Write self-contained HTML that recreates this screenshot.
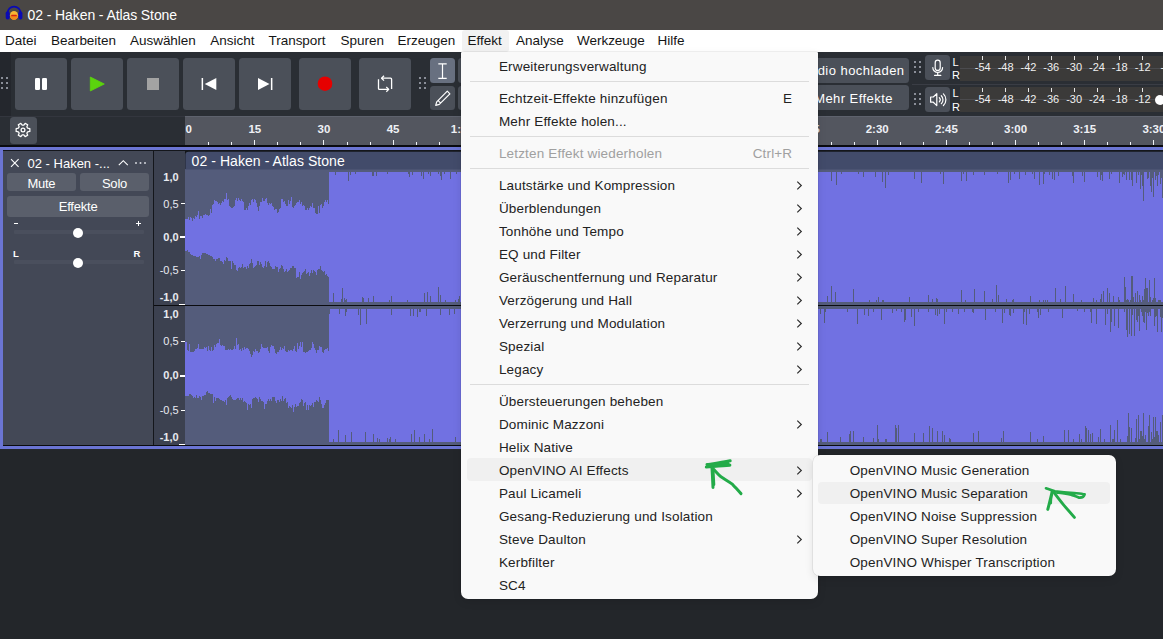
<!DOCTYPE html><html lang="de"><head><meta charset="utf-8"><title>02 - Haken - Atlas Stone</title><style>
*{box-sizing:border-box;margin:0;padding:0}
html,body{width:1163px;height:639px;overflow:hidden;background:#23262a}
body{position:relative;font-family:"Liberation Sans",sans-serif;font-size:13px;color:#fff}
.abs{position:absolute}
.t{position:absolute;white-space:nowrap;line-height:1}
#title{left:0;top:0;width:1163px;height:30px;background:#4a4745}
#menubar{left:0;top:30px;width:1163px;height:22px;background:#fff}
#menubar .t{color:#151515;font-size:13.5px;letter-spacing:-.03px;top:4.4px}
#toolbar{left:0;top:52px;width:1163px;height:64px;background:#2a2e34}
.btn{position:absolute;background:#4b5059;border-radius:3.5px}
.dot{position:absolute;width:2px;height:2px;background:#8a8e98}
#ruler{left:0;top:116px;width:1163px;height:30px;background:#2a2e34}
.rl{position:absolute;top:7.3px;font-weight:bold;font-size:11.5px;line-height:12px;color:#eef0f5;white-space:nowrap;transform:translateX(-50%)}
.menu{position:absolute;background:#f9f9f9;border-radius:7px;box-shadow:0 0 0 .6px rgba(0,0,0,.10),0 3px 8px rgba(0,0,0,.10)}
.mi{position:absolute;left:0;height:23px;line-height:23px;font-size:13.5px;letter-spacing:.17px;color:#222;white-space:nowrap}
.mi.dis{color:#a0a0a0}
.sep{position:absolute;height:1px;background:#dcdcdc}
.hl{position:absolute;background:#f0f0f0;border-radius:4px}
.sc{position:absolute;right:0;text-align:right}
.vl{position:absolute;font-size:11px;line-height:11px;color:#e8eaf0;white-space:nowrap;text-align:right;width:26px;left:153px}
.vl b{font-weight:bold}
.ml{position:absolute;font-size:11px;line-height:11px;color:#f0f0f0;white-space:nowrap;transform:translateX(-50%)}
</style></head><body>
<div id="title" class="abs">
<svg class="abs" style="left:5px;top:5px" width="18" height="16" viewBox="5 5 18 16"><path d="M7.6 14 V13 a6.45 6.45 0 0 1 12.9 0 V14" fill="none" stroke="#0a0ab4" stroke-width="1.7"/><rect x="5.7" y="11.3" width="4" height="8.2" rx="1.9" fill="#0a0ab4"/><rect x="18.4" y="11.3" width="4" height="8.2" rx="1.9" fill="#0a0ab4"/><ellipse cx="14" cy="15.4" rx="4.1" ry="4.4" fill="#f7b733"/><path d="M9.9 15.4 a4.1 4.4 0 0 0 8.2 0 z" fill="#f08a1c"/><rect x="11.2" y="14.8" width="5.6" height="1.5" rx=".5" fill="#d8230f"/></svg>
<div class="t" style="left:27.6px;top:8.3px;font-size:14px;letter-spacing:-.1px;color:#fff">02 - Haken - Atlas Stone</div>
</div>
<div id="menubar" class="abs">
<div class="abs" style="left:462px;top:0;width:47px;height:22px;background:#f2f2f2;border-radius:3px"></div>
<div class="t" style="left:5px">Datei</div>
<div class="t" style="left:51px">Bearbeiten</div>
<div class="t" style="left:130px">Auswählen</div>
<div class="t" style="left:210.3px">Ansicht</div>
<div class="t" style="left:268.5px">Transport</div>
<div class="t" style="left:340.6px">Spuren</div>
<div class="t" style="left:397.6px">Erzeugen</div>
<div class="t" style="left:467.6px">Effekt</div>
<div class="t" style="left:516px">Analyse</div>
<div class="t" style="left:577px">Werkzeuge</div>
<div class="t" style="left:657.6px">Hilfe</div>
</div>
<div id="toolbar" class="abs">
<div class="abs" style="left:0;top:0;width:11px;height:64px;background:#24272d"></div>
<div class="dot" style="left:0.9px;top:25px"></div><div class="dot" style="left:0.9px;top:30px"></div><div class="dot" style="left:0.9px;top:35px"></div><div class="dot" style="left:5.9px;top:25px"></div><div class="dot" style="left:5.9px;top:30px"></div><div class="dot" style="left:5.9px;top:35px"></div>
<div class="btn" style="left:15px;top:6px;width:52px;height:52px"></div>
<div class="btn" style="left:71px;top:6px;width:52px;height:52px"></div>
<div class="btn" style="left:127px;top:6px;width:52px;height:52px"></div>
<div class="btn" style="left:183px;top:6px;width:52px;height:52px"></div>
<div class="btn" style="left:239px;top:6px;width:52px;height:52px"></div>
<div class="btn" style="left:299px;top:6px;width:52px;height:52px"></div>
<div class="btn" style="left:359px;top:6px;width:52px;height:52px"></div>
<svg class="abs" style="left:0;top:0" width="470" height="64" viewBox="0 52 470 64">
<rect x="35" y="78" width="5" height="12" rx="1.3" fill="#fff"/><rect x="42" y="78" width="5" height="12" rx="1.3" fill="#fff"/>
<path d="M90.3 77 L104.3 84 L90.3 91 Z" fill="#5bd40d" stroke="#5bd40d" stroke-width="0.8" stroke-linejoin="round"/>
<rect x="147" y="78" width="12" height="12" fill="#a3a3a3"/>
<rect x="201.6" y="78" width="1.5" height="12" fill="#fff"/><path d="M204.8 84 L216.3 78 V90 Z" fill="#fff"/>
<path d="M258 78 L269.5 84 L258 90 Z" fill="#fff"/><rect x="270.9" y="78" width="1.5" height="12" fill="#fff"/>
<circle cx="325" cy="83.7" r="7.3" fill="#e60000"/>
<g fill="none" stroke="#fff" stroke-width="1.3" stroke-linecap="butt" stroke-linejoin="round"><path d="M381.6 78.2 H390.6 a1 1 0 0 1 1 1 V88.9"/><path d="M384 75.8 L381.6 78.2 L384 80.6"/><path d="M378.5 79.2 V88.4 a1 1 0 0 0 1 1 H388.6"/><path d="M386.3 87 L388.7 89.4 L386.3 91.8"/></g>
</svg>
<div class="dot" style="left:419px;top:25px"></div><div class="dot" style="left:419px;top:30px"></div><div class="dot" style="left:419px;top:35px"></div><div class="dot" style="left:424px;top:25px"></div><div class="dot" style="left:424px;top:30px"></div><div class="dot" style="left:424px;top:35px"></div>
<div class="btn" style="left:430px;top:6px;width:25px;height:24.5px;background:#687080"></div>
<div class="btn" style="left:430px;top:33.5px;width:25px;height:24.5px"></div>
<div class="btn" style="left:457.5px;top:6px;width:25px;height:24.5px"></div>
<div class="btn" style="left:457.5px;top:33.5px;width:25px;height:24.5px"></div>
<svg class="abs" style="left:430px;top:6px" width="25" height="52" viewBox="430 58 25 52"><g fill="none" stroke="#fff" stroke-width="1.2"><path d="M442.5 63.8 V78.4 M438.3 63.8 H446.7 M438.3 78.4 H446.7"/><path d="M447.3 91.2 l2.6 2.6 l-10.6 10.6 l-3.6 1 l1 -3.6 z M438.2 100.6 l2.7 2.7" stroke-linejoin="round"/></g></svg>
</div>
<div class="btn" style="left:796px;top:58px;width:113px;height:24.5px"></div>
<div class="btn" style="left:796px;top:85.3px;width:113px;height:24.5px"></div>
<div class="t" style="right:258.5px;top:64.1px;font-size:13px;letter-spacing:.45px;color:#fff">Audio hochladen</div>
<div class="t" style="right:270px;top:91.8px;font-size:13px;letter-spacing:.45px;color:#fff">Mehr Effekte</div>
<div class="dot" style="left:913.7px;top:60.8px"></div><div class="dot" style="left:913.7px;top:65.8px"></div><div class="dot" style="left:913.7px;top:70.8px"></div><div class="dot" style="left:918.7px;top:60.8px"></div><div class="dot" style="left:918.7px;top:65.8px"></div><div class="dot" style="left:918.7px;top:70.8px"></div>
<div class="dot" style="left:913.7px;top:92.7px"></div><div class="dot" style="left:913.7px;top:97.7px"></div><div class="dot" style="left:913.7px;top:102.7px"></div><div class="dot" style="left:918.7px;top:92.7px"></div><div class="dot" style="left:918.7px;top:97.7px"></div><div class="dot" style="left:918.7px;top:102.7px"></div>
<div class="abs" style="left:912px;top:84px;width:251px;height:1px;background:#3a3d45"></div>
<div class="btn" style="left:924.9px;top:55px;width:25.1px;height:25px"></div>
<div class="btn" style="left:924.9px;top:87px;width:25.1px;height:25px"></div>
<svg class="abs" style="left:925px;top:55px" width="26" height="58" viewBox="925 55 26 58"><g fill="none" stroke="#fff" stroke-width="1.2" stroke-linecap="round" stroke-linejoin="round"><rect x="935.2" y="60.2" width="5" height="10.2" rx="2.5"/><path d="M932.8 67.5 a4.9 4.9 0 0 0 9.8 0 M937.7 72.6 V75.4 M934.6 75.4 H940.8"/><path d="M930.6 97 H933.3 L936.8 93.6 V105.6 L933.3 102.2 H930.6 Z"/><path d="M939.3 97.6 a3 3 0 0 1 0 4.2 M941.3 95.7 a5.6 5.6 0 0 1 0 8 M943.4 93.9 a8 8 0 0 1 0 11.6"/></g></svg>
<div class="t" style="left:952.5px;top:56.5px;font-size:11px;color:#fff">L</div>
<div class="t" style="left:952px;top:70px;font-size:11px;color:#fff">R</div>
<div class="t" style="left:952.5px;top:88.3px;font-size:11px;color:#fff">L</div>
<div class="t" style="left:952px;top:101.8px;font-size:11px;color:#fff">R</div>
<div class="abs" style="left:959.5px;top:55.5px;width:204px;height:25px;background:#3b3a39"></div>
<div class="abs" style="left:959.5px;top:67.5px;width:204px;height:1px;background:#4b4b4e"></div>
<div class="abs" style="left:982.3px;top:56.0px;width:1px;height:4px;background:#e6e6e6"></div>
<div class="ml" style="left:982.8px;top:62.0px">-54</div>
<div class="abs" style="left:1005.1px;top:56.0px;width:1px;height:4px;background:#e6e6e6"></div>
<div class="ml" style="left:1005.6px;top:62.0px">-48</div>
<div class="abs" style="left:1028.0px;top:56.0px;width:1px;height:4px;background:#e6e6e6"></div>
<div class="ml" style="left:1028.5px;top:62.0px">-42</div>
<div class="abs" style="left:1050.8px;top:56.0px;width:1px;height:4px;background:#e6e6e6"></div>
<div class="ml" style="left:1051.3px;top:62.0px">-36</div>
<div class="abs" style="left:1073.6px;top:56.0px;width:1px;height:4px;background:#e6e6e6"></div>
<div class="ml" style="left:1074.1px;top:62.0px">-30</div>
<div class="abs" style="left:1096.5px;top:56.0px;width:1px;height:4px;background:#e6e6e6"></div>
<div class="ml" style="left:1097.0px;top:62.0px">-24</div>
<div class="abs" style="left:1119.3px;top:56.0px;width:1px;height:4px;background:#e6e6e6"></div>
<div class="ml" style="left:1119.8px;top:62.0px">-18</div>
<div class="abs" style="left:1142.1px;top:56.0px;width:1px;height:4px;background:#e6e6e6"></div>
<div class="ml" style="left:1142.6px;top:62.0px">-12</div>
<div class="abs" style="left:1164.9px;top:56.0px;width:1px;height:4px;background:#e6e6e6"></div>
<div class="ml" style="left:1165.4px;top:62.0px">-6</div>
<div class="abs" style="left:959.5px;top:87.3px;width:204px;height:25px;background:#3b3a39"></div>
<div class="abs" style="left:959.5px;top:99.3px;width:204px;height:1px;background:#4b4b4e"></div>
<div class="abs" style="left:982.3px;top:87.8px;width:1px;height:4px;background:#e6e6e6"></div>
<div class="ml" style="left:982.8px;top:93.8px">-54</div>
<div class="abs" style="left:1005.1px;top:87.8px;width:1px;height:4px;background:#e6e6e6"></div>
<div class="ml" style="left:1005.6px;top:93.8px">-48</div>
<div class="abs" style="left:1028.0px;top:87.8px;width:1px;height:4px;background:#e6e6e6"></div>
<div class="ml" style="left:1028.5px;top:93.8px">-42</div>
<div class="abs" style="left:1050.8px;top:87.8px;width:1px;height:4px;background:#e6e6e6"></div>
<div class="ml" style="left:1051.3px;top:93.8px">-36</div>
<div class="abs" style="left:1073.6px;top:87.8px;width:1px;height:4px;background:#e6e6e6"></div>
<div class="ml" style="left:1074.1px;top:93.8px">-30</div>
<div class="abs" style="left:1096.5px;top:87.8px;width:1px;height:4px;background:#e6e6e6"></div>
<div class="ml" style="left:1097.0px;top:93.8px">-24</div>
<div class="abs" style="left:1119.3px;top:87.8px;width:1px;height:4px;background:#e6e6e6"></div>
<div class="ml" style="left:1119.8px;top:93.8px">-18</div>
<div class="abs" style="left:1142.1px;top:87.8px;width:1px;height:4px;background:#e6e6e6"></div>
<div class="ml" style="left:1142.6px;top:93.8px">-12</div>
<div class="abs" style="left:1164.9px;top:87.8px;width:1px;height:4px;background:#e6e6e6"></div>
<div class="ml" style="left:1165.4px;top:93.8px">-6</div>
<div class="abs" style="left:1154.5px;top:94.7px;width:10.5px;height:10.5px;border-radius:50%;background:#fff"></div>
<div id="ruler" class="abs">
<div class="abs" style="left:0;top:0;width:1163px;height:1px;background:#33363e"></div>
<div class="btn" style="left:10.1px;top:.8px;width:26.8px;height:27.2px"></div>
<svg class="abs" style="left:9.9px;top:.9px" width="26" height="26" viewBox="-13 -13 26 26"><g fill="none" stroke="#fff" stroke-width="1.25" stroke-linejoin="round">
<path d="M4.68 -1.76 L6.85 -1.46 L6.85 1.46 L4.68 1.76 L3.87 3.17 L4.69 5.20 L2.16 6.66 L0.81 4.93 L-0.81 4.93 L-2.16 6.66 L-4.69 5.20 L-3.87 3.17 L-4.68 1.76 L-6.85 1.46 L-6.85 -1.46 L-4.68 -1.76 L-3.87 -3.17 L-4.69 -5.20 L-2.16 -6.66 L-0.81 -4.93 L0.81 -4.93 L2.16 -6.66 L4.69 -5.20 L3.87 -3.17 Z"/><circle r="1.9"/></g></svg>
<div class="abs" style="left:185px;top:0;width:978px;height:30px;background:#53565f"></div>
<div class="abs" style="left:185px;top:0;width:978px;height:1px;background:#5e626d"></div>
<div class="rl" style="left:185.5px;transform:none">0</div>
<div class="abs" style="left:208.2px;top:25.5px;width:1px;height:3.4px;background:#f0f2f6"></div>
<div class="abs" style="left:231.2px;top:25.5px;width:1px;height:3.4px;background:#f0f2f6"></div>
<div class="abs" style="left:254.3px;top:23.5px;width:1px;height:5.4px;background:#f0f2f6"></div>
<div class="rl" style="left:254.8px">15</div>
<div class="abs" style="left:277.3px;top:25.5px;width:1px;height:3.4px;background:#f0f2f6"></div>
<div class="abs" style="left:300.4px;top:25.5px;width:1px;height:3.4px;background:#f0f2f6"></div>
<div class="abs" style="left:323.4px;top:23.5px;width:1px;height:5.4px;background:#f0f2f6"></div>
<div class="rl" style="left:323.9px">30</div>
<div class="abs" style="left:346.5px;top:25.5px;width:1px;height:3.4px;background:#f0f2f6"></div>
<div class="abs" style="left:369.5px;top:25.5px;width:1px;height:3.4px;background:#f0f2f6"></div>
<div class="abs" style="left:392.6px;top:23.5px;width:1px;height:5.4px;background:#f0f2f6"></div>
<div class="rl" style="left:393.1px">45</div>
<div class="abs" style="left:415.6px;top:25.5px;width:1px;height:3.4px;background:#f0f2f6"></div>
<div class="abs" style="left:438.7px;top:25.5px;width:1px;height:3.4px;background:#f0f2f6"></div>
<div class="abs" style="left:461.8px;top:23.5px;width:1px;height:5.4px;background:#f0f2f6"></div>
<div class="rl" style="left:462.3px">1:00</div>
<div class="abs" style="left:484.8px;top:25.5px;width:1px;height:3.4px;background:#f0f2f6"></div>
<div class="abs" style="left:507.9px;top:25.5px;width:1px;height:3.4px;background:#f0f2f6"></div>
<div class="abs" style="left:530.9px;top:23.5px;width:1px;height:5.4px;background:#f0f2f6"></div>
<div class="rl" style="left:531.4px">1:15</div>
<div class="abs" style="left:554.0px;top:25.5px;width:1px;height:3.4px;background:#f0f2f6"></div>
<div class="abs" style="left:577.0px;top:25.5px;width:1px;height:3.4px;background:#f0f2f6"></div>
<div class="abs" style="left:600.1px;top:23.5px;width:1px;height:5.4px;background:#f0f2f6"></div>
<div class="rl" style="left:600.6px">1:30</div>
<div class="abs" style="left:623.1px;top:25.5px;width:1px;height:3.4px;background:#f0f2f6"></div>
<div class="abs" style="left:646.2px;top:25.5px;width:1px;height:3.4px;background:#f0f2f6"></div>
<div class="abs" style="left:669.3px;top:23.5px;width:1px;height:5.4px;background:#f0f2f6"></div>
<div class="rl" style="left:669.8px">1:45</div>
<div class="abs" style="left:692.3px;top:25.5px;width:1px;height:3.4px;background:#f0f2f6"></div>
<div class="abs" style="left:715.4px;top:25.5px;width:1px;height:3.4px;background:#f0f2f6"></div>
<div class="abs" style="left:738.4px;top:23.5px;width:1px;height:5.4px;background:#f0f2f6"></div>
<div class="rl" style="left:738.9px">2:00</div>
<div class="abs" style="left:761.5px;top:25.5px;width:1px;height:3.4px;background:#f0f2f6"></div>
<div class="abs" style="left:784.5px;top:25.5px;width:1px;height:3.4px;background:#f0f2f6"></div>
<div class="abs" style="left:807.6px;top:23.5px;width:1px;height:5.4px;background:#f0f2f6"></div>
<div class="rl" style="left:808.1px">2:15</div>
<div class="abs" style="left:830.6px;top:25.5px;width:1px;height:3.4px;background:#f0f2f6"></div>
<div class="abs" style="left:853.7px;top:25.5px;width:1px;height:3.4px;background:#f0f2f6"></div>
<div class="abs" style="left:876.8px;top:23.5px;width:1px;height:5.4px;background:#f0f2f6"></div>
<div class="rl" style="left:877.2px">2:30</div>
<div class="abs" style="left:899.8px;top:25.5px;width:1px;height:3.4px;background:#f0f2f6"></div>
<div class="abs" style="left:922.9px;top:25.5px;width:1px;height:3.4px;background:#f0f2f6"></div>
<div class="abs" style="left:945.9px;top:23.5px;width:1px;height:5.4px;background:#f0f2f6"></div>
<div class="rl" style="left:946.4px">2:45</div>
<div class="abs" style="left:969.0px;top:25.5px;width:1px;height:3.4px;background:#f0f2f6"></div>
<div class="abs" style="left:992.0px;top:25.5px;width:1px;height:3.4px;background:#f0f2f6"></div>
<div class="abs" style="left:1015.1px;top:23.5px;width:1px;height:5.4px;background:#f0f2f6"></div>
<div class="rl" style="left:1015.6px">3:00</div>
<div class="abs" style="left:1038.1px;top:25.5px;width:1px;height:3.4px;background:#f0f2f6"></div>
<div class="abs" style="left:1061.2px;top:25.5px;width:1px;height:3.4px;background:#f0f2f6"></div>
<div class="abs" style="left:1084.2px;top:23.5px;width:1px;height:5.4px;background:#f0f2f6"></div>
<div class="rl" style="left:1084.7px">3:15</div>
<div class="abs" style="left:1107.3px;top:25.5px;width:1px;height:3.4px;background:#f0f2f6"></div>
<div class="abs" style="left:1130.4px;top:25.5px;width:1px;height:3.4px;background:#f0f2f6"></div>
<div class="abs" style="left:1153.4px;top:23.5px;width:1px;height:5.4px;background:#f0f2f6"></div>
<div class="rl" style="left:1153.9px">3:30</div>
</div>
<div class="abs" style="left:0;top:144.9px;width:1163px;height:1.9px;background:#0a0b0f"></div>
<div class="abs" style="left:0;top:146.7px;width:1163px;height:302.5px;background:#6b75d3"></div>
<div class="abs" style="left:2.6px;top:150.2px;width:1161px;height:295.3px;background:#14161b"></div>
<div class="abs" style="left:3.4px;top:151px;width:149.6px;height:293.8px;background:#434856"></div>
<div class="abs" style="left:154px;top:151px;width:31px;height:293.8px;background:#3c4150"></div>
<svg class="abs" style="left:8px;top:156px" width="144" height="14" viewBox="8 156 144 14"><g fill="none" stroke="#fff" stroke-width="1.1"><path d="M11 159.2 L18.6 166.8 M18.6 159.2 L11 166.8"/><path d="M118.8 165.2 L123.3 160.7 L127.8 165.2"/></g><circle cx="136" cy="163" r="1" fill="#d0d3da"/><circle cx="140.5" cy="163" r="1" fill="#d0d3da"/><circle cx="145" cy="163" r="1" fill="#d0d3da"/></svg>
<div class="t" style="left:27.5px;top:157px;font-size:13px;letter-spacing:0;color:#fff">02 - Haken -...</div>
<div class="btn" style="left:7.2px;top:173.3px;width:68.5px;height:17.4px;background:#5a5f6b;border-radius:3px"></div>
<div class="btn" style="left:80px;top:173.3px;width:69px;height:17.4px;background:#5a5f6b;border-radius:3px"></div>
<div class="btn" style="left:7.2px;top:195.5px;width:141.8px;height:21.2px;background:#5a5f6b;border-radius:3px"></div>
<div class="t" style="left:7.2px;width:68.5px;text-align:center;top:176.7px;font-size:13px;letter-spacing:-.3px;color:#fff">Mute</div>
<div class="t" style="left:80px;width:69px;text-align:center;top:176.7px;font-size:13px;letter-spacing:-.2px;color:#fff">Solo</div>
<div class="t" style="left:7.2px;width:141.8px;text-align:center;top:199.8px;font-size:13px;letter-spacing:-.2px;color:#fff">Effekte</div>
<div class="abs" style="left:13.5px;top:230.2px;width:130px;height:3.5px;background:#4a4f5d;border-radius:1px"></div>
<div class="abs" style="left:72.8px;top:228.0px;width:10.4px;height:10.4px;border-radius:50%;background:#fff"></div>
<div class="abs" style="left:13.5px;top:260px;width:130px;height:3.5px;background:#4a4f5d;border-radius:1px"></div>
<div class="abs" style="left:72.8px;top:257.8px;width:10.4px;height:10.4px;border-radius:50%;background:#fff"></div>
<div class="abs" style="left:13.7px;top:222.6px;width:4.2px;height:1.3px;background:#fff"></div>
<div class="abs" style="left:136.2px;top:222.6px;width:5px;height:1.3px;background:#fff"></div><div class="abs" style="left:138.05px;top:220.7px;width:1.3px;height:5px;background:#fff"></div>
<div class="t" style="left:13px;top:248.5px;font-size:9.5px;font-weight:bold;color:#fff">L</div>
<div class="t" style="left:133.6px;top:248.5px;font-size:9.5px;font-weight:bold;color:#fff">R</div>
<div class="vl" style="top:171.8px;left:138.6px;width:40px"><b>1,0</b></div>
<div class="vl" style="top:198.5px;left:138.6px;width:40px">0,5</div>
<div class="vl" style="top:232.0px;left:138.6px;width:40px"><b>0,0</b></div>
<div class="vl" style="top:265.4px;left:138.6px;width:40px">-0,5</div>
<div class="vl" style="top:291.8px;left:138.6px;width:40px"><b>-1,0</b></div>
<div class="vl" style="top:309.3px;left:138.6px;width:40px"><b>1,0</b></div>
<div class="vl" style="top:336.0px;left:138.6px;width:40px">0,5</div>
<div class="vl" style="top:370.3px;left:138.6px;width:40px"><b>0,0</b></div>
<div class="vl" style="top:405.4px;left:138.6px;width:40px">-0,5</div>
<div class="vl" style="top:431.6px;left:138.6px;width:40px"><b>-1,0</b></div>
<div class="abs" style="left:181px;top:203.2px;width:4px;height:1px;background:#fff"></div>
<div class="abs" style="left:180px;top:236.2px;width:5px;height:2px;background:#fff"></div>
<div class="abs" style="left:181px;top:269.7px;width:4px;height:1px;background:#fff"></div>
<div class="abs" style="left:179px;top:303.6px;width:6px;height:1px;background:#fff"></div>
<div class="abs" style="left:181px;top:340.8px;width:4px;height:1px;background:#fff"></div>
<div class="abs" style="left:180px;top:374.5px;width:5px;height:2px;background:#fff"></div>
<div class="abs" style="left:181px;top:409.9px;width:4px;height:1px;background:#fff"></div>
<div class="abs" style="left:179px;top:443.8px;width:6px;height:1px;background:#fff"></div>
<svg class="abs" style="left:185px;top:151px" width="978" height="294" viewBox="185 151 978 294" shape-rendering="crispEdges"><rect x="185.4" y="169" width="978" height="276" fill="#545c7b"/><path d="M185.4 169.4 V155 a3.2 3.2 0 0 1 3.2 -3.2 H1163 V169.4 Z" fill="#424b6a" shape-rendering="auto"/><path d="M185.4 237.0L185.4 218.5 H187L187 218.7 H188L188 216.6 H189L189 220.2 H190L190 217.2 H191L191 218.0 H192L192 221.0 H193L193 218.1 H194L194 219.3 H195L195 216.0 H196L196 216.6 H197L197 215.1 H198L198 210.8 H199L199 218.6 H200L200 216.2 H201L201 216.0 H202L202 218.0 H203L203 215.2 H204L204 214.8 H205L205 213.8 H206L206 215.2 H207L207 215.4 H208L208 215.6 H209L209 215.0 H210L210 208.7 H211L211 213.2 H212L212 205.0 H213L213 204.2 H214L214 199.9 H215L215 201.1 H216L216 201.4 H217L217 202.4 H218L218 204.3 H219L219 203.3 H220L220 205.4 H221L221 202.5 H222L222 201.4 H223L223 201.6 H224L224 199.3 H225L225 198.5 H226L226 193.4 H227L227 199.5 H228L228 199.4 H229L229 205.7 H230L230 207.1 H231L231 208.4 H232L232 208.1 H233L233 207.0 H234L234 206.1 H235L235 199.8 H236L236 197.7 H237L237 200.5 H238L238 197.9 H239L239 200.0 H240L240 200.6 H241L241 199.4 H242L242 201.3 H243L243 202.4 H244L244 209.7 H245L245 210.2 H246L246 207.6 H247L247 209.6 H248L248 206.2 H249L249 202.5 H250L250 205.4 H251L251 200.1 H252L252 199.1 H253L253 202.2 H254L254 198.5 H255L255 200.3 H256L256 203.3 H257L257 207.2 H258L258 211.1 H259L259 206.1 H260L260 202.0 H261L261 201.9 H262L262 197.5 H263L263 201.1 H264L264 200.7 H265L265 199.4 H266L266 198.3 H267L267 203.0 H268L268 205.2 H269L269 203.3 H270L270 203.5 H271L271 202.6 H272L272 206.1 H273L273 206.6 H274L274 210.2 H275L275 208.6 H276L276 209.4 H277L277 212.8 H278L278 211.7 H279L279 208.5 H280L280 208.1 H281L281 198.7 H282L282 198.8 H283L283 201.5 H284L284 201.4 H285L285 204.4 H286L286 206.2 H287L287 205.8 H288L288 200.3 H289L289 203.7 H290L290 201.4 H291L291 197.0 H292L292 206.7 H293L293 207.7 H294L294 206.3 H295L295 205.2 H296L296 202.7 H297L297 201.8 H298L298 201.8 H299L299 200.4 H300L300 204.2 H301L301 202.3 H302L302 206.4 H303L303 205.2 H304L304 205.5 H305L305 210.1 H306L306 210.3 H307L307 208.0 H308L308 209.7 H309L309 208.0 H310L310 205.6 H311L311 206.5 H312L312 203.0 H313L313 207.8 H314L314 207.9 H315L315 213.1 H316L316 214.1 H317L317 214.1 H318L318 205.7 H319L319 212.5 H320L320 204.9 H321L321 203.6 H322L322 208.2 H323L323 205.8 H324L324 201.9 H325L325 200.1 H326L326 201.5 H327L327 200.2 H328L328 203.6 H329L329 171.6 H330L330 171.6 H331L331 171.6 H332L332 171.6 H333L333 171.6 H334L334 171.6 H335L335 174.5 H336L336 171.6 H337L337 171.6 H338L338 171.6 H339L339 171.6 H340L340 171.6 H341L341 171.6 H342L342 171.6 H343L343 171.6 H344L344 171.6 H345L345 171.6 H346L346 171.6 H347L347 171.6 H348L348 181.4 H349L349 171.6 H350L350 174.6 H351L351 171.6 H352L352 171.6 H353L353 171.6 H354L354 171.6 H355L355 174.0 H356L356 171.6 H357L357 171.6 H358L358 171.6 H359L359 171.6 H360L360 171.6 H361L361 171.6 H362L362 171.6 H363L363 171.6 H364L364 171.6 H365L365 171.6 H366L366 171.6 H367L367 171.6 H368L368 171.6 H369L369 171.6 H370L370 171.6 H371L371 171.6 H372L372 176.3 H373L373 176.4 H374L374 171.6 H375L375 171.6 H376L376 175.8 H377L377 171.6 H378L378 171.6 H379L379 171.6 H380L380 171.6 H381L381 171.6 H382L382 171.6 H383L383 171.6 H384L384 171.6 H385L385 171.6 H386L386 171.6 H387L387 174.2 H388L388 171.6 H389L389 171.6 H390L390 171.6 H391L391 171.6 H392L392 171.6 H393L393 171.6 H394L394 171.6 H395L395 171.6 H396L396 171.6 H397L397 171.6 H398L398 171.6 H399L399 171.6 H400L400 171.6 H401L401 171.6 H402L402 171.6 H403L403 171.6 H404L404 171.6 H405L405 171.6 H406L406 171.6 H407L407 171.6 H408L408 174.1 H409L409 177.0 H410L410 171.6 H411L411 171.6 H412L412 174.9 H413L413 171.6 H414L414 171.6 H415L415 171.6 H416L416 171.6 H417L417 171.6 H418L418 171.6 H419L419 171.6 H420L420 171.6 H421L421 176.1 H422L422 171.6 H423L423 179.1 H424L424 171.6 H425L425 171.6 H426L426 171.6 H427L427 171.6 H428L428 174.0 H429L429 171.6 H430L430 175.6 H431L431 171.6 H432L432 171.6 H433L433 171.6 H434L434 171.6 H435L435 171.6 H436L436 171.6 H437L437 171.6 H438L438 174.4 H439L439 171.6 H440L440 175.5 H441L441 179.8 H442L442 171.6 H443L443 171.6 H444L444 174.0 H445L445 171.6 H446L446 171.6 H447L447 171.6 H448L448 171.6 H449L449 171.6 H450L450 178.5 H451L451 171.6 H452L452 171.6 H453L453 171.6 H454L454 171.6 H455L455 171.6 H456L456 174.0 H457L457 171.6 H458L458 171.6 H459L459 171.6 H460L460 171.6 H461L461 171.6 H462L462 171.6 H463L463 171.6 H464L464 187.5 H465L465 171.6 H466L466 171.6 H467L467 171.6 H468L468 171.6 H469L469 171.6 H470L470 171.6 H471L471 171.6 H472L472 171.6 H473L473 171.6 H474L474 171.6 H475L475 171.6 H476L476 174.3 H477L477 171.6 H478L478 171.6 H479L479 171.6 H480L480 171.6 H481L481 171.6 H482L482 188.6 H483L483 171.6 H484L484 171.6 H485L485 171.6 H486L486 171.6 H487L487 171.6 H488L488 171.6 H489L489 180.0 H490L490 171.6 H491L491 171.6 H492L492 171.6 H493L493 171.6 H494L494 184.5 H495L495 171.6 H496L496 171.6 H497L497 171.6 H498L498 171.6 H499L499 179.9 H500L500 171.6 H501L501 171.6 H502L502 171.6 H503L503 171.6 H504L504 171.6 H505L505 171.6 H506L506 188.6 H507L507 171.6 H508L508 171.6 H509L509 171.6 H510L510 171.6 H511L511 185.3 H512L512 171.6 H513L513 171.6 H514L514 171.6 H515L515 171.6 H516L516 178.6 H517L517 171.6 H518L518 171.6 H519L519 171.6 H520L520 171.6 H521L521 171.6 H522L522 174.0 H523L523 171.6 H524L524 174.5 H525L525 171.6 H526L526 171.6 H527L527 171.6 H528L528 171.6 H529L529 171.6 H530L530 171.6 H531L531 171.6 H532L532 171.6 H533L533 171.6 H534L534 181.2 H535L535 174.2 H536L536 171.6 H537L537 171.6 H538L538 171.6 H539L539 171.6 H540L540 171.6 H541L541 171.6 H542L542 171.6 H543L543 171.6 H544L544 171.6 H545L545 171.6 H546L546 171.6 H547L547 171.6 H548L548 171.6 H549L549 171.6 H550L550 171.6 H551L551 171.6 H552L552 171.6 H553L553 171.6 H554L554 171.6 H555L555 171.6 H556L556 186.0 H557L557 171.6 H558L558 171.6 H559L559 171.6 H560L560 186.0 H561L561 171.6 H562L562 171.6 H563L563 171.6 H564L564 180.0 H565L565 171.6 H566L566 171.6 H567L567 171.6 H568L568 171.6 H569L569 171.6 H570L570 171.6 H571L571 171.6 H572L572 171.6 H573L573 171.6 H574L574 171.6 H575L575 176.3 H576L576 174.4 H577L577 171.6 H578L578 171.6 H579L579 171.6 H580L580 177.2 H581L581 171.6 H582L582 175.8 H583L583 171.6 H584L584 171.6 H585L585 178.8 H586L586 171.6 H587L587 171.6 H588L588 171.6 H589L589 171.6 H590L590 171.6 H591L591 184.8 H592L592 171.6 H593L593 171.6 H594L594 171.6 H595L595 171.6 H596L596 171.6 H597L597 171.6 H598L598 171.6 H599L599 171.6 H600L600 171.6 H601L601 176.6 H602L602 186.6 H603L603 171.6 H604L604 171.6 H605L605 171.6 H606L606 171.6 H607L607 171.6 H608L608 171.6 H609L609 171.6 H610L610 171.6 H611L611 171.6 H612L612 178.1 H613L613 171.6 H614L614 176.0 H615L615 171.6 H616L616 171.6 H617L617 176.4 H618L618 179.2 H619L619 171.6 H620L620 171.6 H621L621 171.6 H622L622 171.6 H623L623 171.6 H624L624 174.1 H625L625 171.6 H626L626 171.6 H627L627 171.6 H628L628 171.6 H629L629 171.6 H630L630 171.6 H631L631 171.6 H632L632 182.7 H633L633 171.6 H634L634 171.6 H635L635 171.6 H636L636 182.1 H637L637 171.6 H638L638 171.6 H639L639 171.6 H640L640 171.6 H641L641 171.6 H642L642 171.6 H643L643 171.6 H644L644 171.6 H645L645 171.6 H646L646 171.6 H647L647 171.6 H648L648 171.6 H649L649 185.4 H650L650 176.8 H651L651 171.6 H652L652 171.6 H653L653 171.6 H654L654 182.2 H655L655 171.6 H656L656 171.6 H657L657 171.6 H658L658 171.6 H659L659 171.6 H660L660 171.6 H661L661 171.6 H662L662 171.6 H663L663 171.6 H664L664 171.6 H665L665 171.6 H666L666 171.6 H667L667 171.6 H668L668 171.6 H669L669 171.6 H670L670 171.6 H671L671 171.6 H672L672 171.6 H673L673 171.6 H674L674 171.6 H675L675 171.6 H676L676 171.6 H677L677 171.6 H678L678 171.6 H679L679 182.7 H680L680 171.6 H681L681 171.6 H682L682 171.6 H683L683 171.6 H684L684 171.6 H685L685 171.6 H686L686 171.6 H687L687 171.6 H688L688 171.6 H689L689 171.6 H690L690 171.6 H691L691 171.6 H692L692 171.6 H693L693 171.6 H694L694 171.6 H695L695 171.6 H696L696 187.1 H697L697 171.6 H698L698 171.6 H699L699 171.6 H700L700 171.6 H701L701 171.6 H702L702 171.6 H703L703 171.6 H704L704 178.7 H705L705 171.6 H706L706 180.6 H707L707 171.6 H708L708 171.6 H709L709 171.6 H710L710 178.1 H711L711 171.6 H712L712 171.6 H713L713 171.6 H714L714 171.6 H715L715 171.6 H716L716 171.6 H717L717 171.6 H718L718 171.6 H719L719 171.6 H720L720 171.6 H721L721 177.6 H722L722 171.6 H723L723 171.6 H724L724 178.0 H725L725 174.2 H726L726 171.6 H727L727 171.6 H728L728 171.6 H729L729 171.6 H730L730 174.0 H731L731 171.6 H732L732 171.6 H733L733 171.6 H734L734 171.6 H735L735 171.6 H736L736 171.6 H737L737 171.6 H738L738 171.6 H739L739 171.6 H740L740 171.6 H741L741 171.6 H742L742 171.6 H743L743 171.6 H744L744 171.6 H745L745 171.6 H746L746 171.6 H747L747 171.6 H748L748 171.6 H749L749 171.6 H750L750 171.6 H751L751 171.6 H752L752 171.6 H753L753 171.6 H754L754 171.6 H755L755 171.6 H756L756 171.6 H757L757 171.6 H758L758 171.6 H759L759 174.6 H760L760 171.6 H761L761 171.6 H762L762 181.6 H763L763 171.6 H764L764 171.6 H765L765 171.6 H766L766 171.6 H767L767 171.6 H768L768 171.6 H769L769 171.6 H770L770 171.6 H771L771 171.6 H772L772 171.6 H773L773 175.4 H774L774 171.6 H775L775 171.6 H776L776 171.6 H777L777 171.6 H778L778 171.6 H779L779 171.6 H780L780 171.6 H781L781 171.6 H782L782 171.6 H783L783 171.6 H784L784 171.6 H785L785 171.6 H786L786 171.6 H787L787 171.6 H788L788 175.0 H789L789 171.6 H790L790 171.6 H791L791 171.6 H792L792 171.6 H793L793 171.6 H794L794 171.6 H795L795 171.6 H796L796 171.6 H797L797 171.6 H798L798 171.6 H799L799 171.6 H800L800 171.6 H801L801 171.6 H802L802 171.6 H803L803 171.6 H804L804 171.6 H805L805 171.6 H806L806 177.7 H807L807 171.6 H808L808 171.6 H809L809 171.6 H810L810 171.6 H811L811 171.6 H812L812 171.6 H813L813 171.6 H814L814 171.6 H815L815 171.6 H816L816 171.6 H817L817 171.6 H818L818 171.6 H819L819 171.6 H820L820 171.6 H821L821 171.6 H822L822 171.6 H823L823 171.6 H824L824 171.6 H825L825 171.6 H826L826 171.6 H827L827 171.6 H828L828 171.6 H829L829 171.6 H830L830 171.6 H831L831 180.6 H832L832 171.6 H833L833 171.6 H834L834 171.6 H835L835 171.6 H836L836 185.2 H837L837 171.6 H838L838 171.6 H839L839 171.6 H840L840 171.6 H841L841 174.4 H842L842 171.6 H843L843 171.6 H844L844 171.6 H845L845 171.6 H846L846 171.6 H847L847 171.6 H848L848 171.6 H849L849 171.6 H850L850 171.6 H851L851 171.6 H852L852 171.6 H853L853 171.6 H854L854 171.6 H855L855 171.6 H856L856 171.6 H857L857 171.6 H858L858 174.0 H859L859 171.6 H860L860 171.6 H861L861 171.6 H862L862 171.6 H863L863 176.8 H864L864 171.6 H865L865 171.6 H866L866 171.6 H867L867 171.6 H868L868 171.6 H869L869 171.6 H870L870 171.6 H871L871 171.6 H872L872 171.6 H873L873 171.6 H874L874 171.6 H875L875 177.3 H876L876 171.6 H877L877 171.6 H878L878 171.6 H879L879 171.6 H880L880 171.6 H881L881 171.6 H882L882 181.5 H883L883 171.6 H884L884 171.6 H885L885 187.6 H886L886 171.6 H887L887 171.6 H888L888 175.3 H889L889 171.6 H890L890 171.6 H891L891 171.6 H892L892 171.6 H893L893 171.6 H894L894 171.6 H895L895 171.6 H896L896 171.6 H897L897 171.6 H898L898 171.6 H899L899 171.6 H900L900 171.6 H901L901 171.6 H902L902 171.6 H903L903 171.6 H904L904 171.6 H905L905 171.6 H906L906 171.6 H907L907 171.6 H908L908 171.6 H909L909 171.6 H910L910 171.6 H911L911 171.6 H912L912 171.6 H913L913 171.6 H914L914 179.0 H915L915 171.6 H916L916 171.6 H917L917 171.6 H918L918 171.6 H919L919 171.6 H920L920 171.6 H921L921 183.1 H922L922 171.6 H923L923 171.6 H924L924 171.6 H925L925 171.6 H926L926 171.6 H927L927 171.6 H928L928 171.6 H929L929 171.6 H930L930 171.6 H931L931 171.6 H932L932 171.6 H933L933 171.6 H934L934 171.6 H935L935 171.6 H936L936 171.6 H937L937 171.6 H938L938 171.6 H939L939 171.6 H940L940 174.1 H941L941 171.6 H942L942 171.6 H943L943 184.0 H944L944 171.6 H945L945 171.6 H946L946 171.6 H947L947 171.6 H948L948 171.6 H949L949 171.6 H950L950 171.6 H951L951 171.6 H952L952 171.6 H953L953 171.6 H954L954 171.6 H955L955 171.6 H956L956 171.6 H957L957 171.6 H958L958 171.6 H959L959 171.6 H960L960 171.6 H961L961 181.2 H962L962 171.6 H963L963 174.0 H964L964 171.6 H965L965 171.6 H966L966 181.2 H967L967 171.6 H968L968 171.6 H969L969 171.6 H970L970 171.6 H971L971 171.6 H972L972 171.6 H973L973 175.4 H974L974 171.6 H975L975 171.6 H976L976 171.6 H977L977 171.6 H978L978 171.6 H979L979 171.6 H980L980 171.6 H981L981 171.6 H982L982 171.6 H983L983 171.6 H984L984 175.3 H985L985 171.6 H986L986 171.6 H987L987 171.6 H988L988 171.6 H989L989 171.6 H990L990 171.6 H991L991 171.6 H992L992 171.6 H993L993 171.6 H994L994 171.6 H995L995 171.6 H996L996 171.6 H997L997 174.3 H998L998 171.6 H999L999 171.6 H1000L1000 171.6 H1001L1001 171.6 H1002L1002 171.6 H1003L1003 171.6 H1004L1004 171.6 H1005L1005 171.6 H1006L1006 171.6 H1007L1007 171.6 H1008L1008 182.6 H1009L1009 171.6 H1010L1010 180.0 H1011L1011 171.6 H1012L1012 171.6 H1013L1013 171.6 H1014L1014 174.4 H1015L1015 171.6 H1016L1016 171.6 H1017L1017 171.6 H1018L1018 171.6 H1019L1019 178.7 H1020L1020 171.6 H1021L1021 171.6 H1022L1022 171.6 H1023L1023 171.6 H1024L1024 171.6 H1025L1025 174.5 H1026L1026 171.6 H1027L1027 171.6 H1028L1028 171.6 H1029L1029 171.6 H1030L1030 171.6 H1031L1031 171.6 H1032L1032 174.0 H1033L1033 171.6 H1034L1034 179.2 H1035L1035 171.6 H1036L1036 171.6 H1037L1037 171.6 H1038L1038 171.6 H1039L1039 185.1 H1040L1040 171.6 H1041L1041 171.6 H1042L1042 171.6 H1043L1043 184.2 H1044L1044 174.0 H1045L1045 171.6 H1046L1046 171.6 H1047L1047 171.6 H1048L1048 171.6 H1049L1049 174.6 H1050L1050 171.6 H1051L1051 171.6 H1052L1052 178.8 H1053L1053 171.6 H1054L1054 179.6 H1055L1055 171.6 H1056L1056 171.6 H1057L1057 171.6 H1058L1058 176.2 H1059L1059 171.6 H1060L1060 171.6 H1061L1061 171.6 H1062L1062 171.6 H1063L1063 171.6 H1064L1064 171.6 H1065L1065 171.6 H1066L1066 171.6 H1067L1067 171.6 H1068L1068 171.6 H1069L1069 171.6 H1070L1070 171.6 H1071L1071 171.6 H1072L1072 176.4 H1073L1073 183.1 H1074L1074 171.6 H1075L1075 171.6 H1076L1076 171.6 H1077L1077 171.6 H1078L1078 171.6 H1079L1079 171.6 H1080L1080 171.6 H1081L1081 171.6 H1082L1082 175.6 H1083L1083 171.6 H1084L1084 181.6 H1085L1085 171.6 H1086L1086 171.6 H1087L1087 171.6 H1088L1088 171.6 H1089L1089 171.6 H1090L1090 171.6 H1091L1091 171.6 H1092L1092 171.6 H1093L1093 171.6 H1094L1094 171.6 H1095L1095 171.6 H1096L1096 171.6 H1097L1097 177.1 H1098L1098 171.6 H1099L1099 171.6 H1100L1100 180.1 H1101L1101 174.5 H1102L1102 181.4 H1103L1103 171.6 H1104L1104 171.6 H1105L1105 171.6 H1106L1106 171.6 H1107L1107 171.6 H1108L1108 171.6 H1109L1109 178.6 H1110L1110 171.6 H1111L1111 174.3 H1112L1112 171.6 H1113L1113 171.6 H1114L1114 171.6 H1115L1115 171.6 H1116L1116 171.6 H1117L1117 171.6 H1118L1118 171.6 H1119L1119 183.3 H1120L1120 171.6 H1121L1121 171.6 H1122L1122 176.7 H1123L1123 174.0 H1124L1124 174.5 H1125L1125 171.6 H1126L1126 179.6 H1127L1127 171.6 H1128L1128 171.6 H1129L1129 180.3 H1130L1130 171.6 H1131L1131 180.3 H1132L1132 185.8 H1133L1133 171.6 H1134L1134 171.6 H1135L1135 171.6 H1136L1136 182.5 H1137L1137 171.6 H1138L1138 174.8 H1139L1139 171.6 H1140L1140 189.1 H1141L1141 174.8 H1142L1142 185.8 H1143L1143 201.1 H1144L1144 171.6 H1145L1145 171.6 H1146L1146 171.6 H1147L1147 178.8 H1148L1148 177.5 H1149L1149 171.6 H1150L1150 185.8 H1151L1151 192.2 H1152L1152 178.1 H1153L1153 196.7 H1154L1154 171.6 H1155L1155 180.4 H1156L1156 176.2 H1157L1157 185.6 H1158L1158 175.0 H1159L1159 171.6 H1160L1160 184.2 H1161L1161 177.5 H1162L1162 198.3 H1163V237.0L1163 302.4 H1162L1162 302.4 H1161L1161 300.0 H1160L1160 300.0 H1159L1159 299.9 H1158L1158 302.4 H1157L1157 302.4 H1156L1156 297.6 H1155L1155 278.0 H1154L1154 298.2 H1153L1153 299.5 H1152L1152 302.4 H1151L1151 297.2 H1150L1150 279.7 H1149L1149 302.4 H1148L1148 288.1 H1147L1147 288.0 H1146L1146 278.1 H1145L1145 289.3 H1144L1144 299.6 H1143L1143 296.1 H1142L1142 302.4 H1141L1141 299.6 H1140L1140 295.0 H1139L1139 302.4 H1138L1138 291.3 H1137L1137 302.4 H1136L1136 292.8 H1135L1135 302.4 H1134L1134 297.1 H1133L1133 275.7 H1132L1132 276.0 H1131L1131 300.0 H1130L1130 302.4 H1129L1129 300.0 H1128L1128 299.4 H1127L1127 300.0 H1126L1126 287.0 H1125L1125 277.4 H1124L1124 302.4 H1123L1123 302.4 H1122L1122 302.4 H1121L1121 302.4 H1120L1120 299.6 H1119L1119 296.8 H1118L1118 302.4 H1117L1117 302.4 H1116L1116 302.4 H1115L1115 302.4 H1114L1114 295.8 H1113L1113 302.4 H1112L1112 302.4 H1111L1111 302.4 H1110L1110 292.7 H1109L1109 302.4 H1108L1108 287.8 H1107L1107 302.4 H1106L1106 302.4 H1105L1105 302.4 H1104L1104 290.8 H1103L1103 302.4 H1102L1102 294.3 H1101L1101 299.2 H1100L1100 302.4 H1099L1099 302.4 H1098L1098 302.4 H1097L1097 299.9 H1096L1096 302.4 H1095L1095 302.4 H1094L1094 297.5 H1093L1093 302.4 H1092L1092 302.4 H1091L1091 302.4 H1090L1090 302.4 H1089L1089 302.4 H1088L1088 302.4 H1087L1087 302.4 H1086L1086 302.4 H1085L1085 302.4 H1084L1084 302.4 H1083L1083 302.4 H1082L1082 300.0 H1081L1081 302.4 H1080L1080 302.4 H1079L1079 302.4 H1078L1078 302.4 H1077L1077 302.4 H1076L1076 302.4 H1075L1075 302.4 H1074L1074 294.1 H1073L1073 302.4 H1072L1072 302.4 H1071L1071 302.4 H1070L1070 302.4 H1069L1069 302.4 H1068L1068 302.4 H1067L1067 302.4 H1066L1066 285.7 H1065L1065 302.4 H1064L1064 302.4 H1063L1063 302.4 H1062L1062 302.4 H1061L1061 298.8 H1060L1060 302.4 H1059L1059 302.4 H1058L1058 302.4 H1057L1057 302.4 H1056L1056 288.2 H1055L1055 302.4 H1054L1054 302.4 H1053L1053 302.4 H1052L1052 302.4 H1051L1051 302.4 H1050L1050 302.4 H1049L1049 302.4 H1048L1048 299.8 H1047L1047 302.4 H1046L1046 300.0 H1045L1045 302.4 H1044L1044 299.6 H1043L1043 302.4 H1042L1042 302.4 H1041L1041 302.4 H1040L1040 299.5 H1039L1039 302.4 H1038L1038 302.4 H1037L1037 302.4 H1036L1036 302.4 H1035L1035 302.4 H1034L1034 302.4 H1033L1033 302.4 H1032L1032 302.4 H1031L1031 296.4 H1030L1030 302.4 H1029L1029 302.4 H1028L1028 302.4 H1027L1027 302.4 H1026L1026 302.4 H1025L1025 302.4 H1024L1024 302.4 H1023L1023 302.4 H1022L1022 302.4 H1021L1021 302.4 H1020L1020 302.4 H1019L1019 302.4 H1018L1018 302.4 H1017L1017 302.4 H1016L1016 302.4 H1015L1015 302.4 H1014L1014 299.4 H1013L1013 300.0 H1012L1012 302.4 H1011L1011 302.4 H1010L1010 302.4 H1009L1009 302.4 H1008L1008 302.4 H1007L1007 299.3 H1006L1006 302.4 H1005L1005 302.4 H1004L1004 302.4 H1003L1003 302.4 H1002L1002 302.4 H1001L1001 302.4 H1000L1000 302.4 H999L999 295.3 H998L998 302.4 H997L997 285.3 H996L996 302.4 H995L995 302.4 H994L994 302.4 H993L993 299.1 H992L992 302.4 H991L991 302.4 H990L990 302.4 H989L989 302.4 H988L988 302.4 H987L987 302.4 H986L986 302.4 H985L985 290.5 H984L984 302.4 H983L983 302.4 H982L982 302.4 H981L981 302.4 H980L980 302.4 H979L979 302.4 H978L978 302.4 H977L977 302.4 H976L976 302.4 H975L975 289.3 H974L974 302.4 H973L973 302.4 H972L972 302.4 H971L971 302.4 H970L970 302.4 H969L969 302.4 H968L968 302.4 H967L967 302.4 H966L966 299.9 H965L965 302.4 H964L964 302.4 H963L963 302.4 H962L962 289.5 H961L961 302.4 H960L960 302.4 H959L959 302.4 H958L958 302.4 H957L957 302.4 H956L956 302.4 H955L955 302.4 H954L954 302.4 H953L953 302.4 H952L952 302.4 H951L951 302.4 H950L950 302.4 H949L949 302.4 H948L948 302.4 H947L947 302.4 H946L946 302.4 H945L945 302.4 H944L944 302.4 H943L943 302.4 H942L942 302.4 H941L941 302.4 H940L940 302.4 H939L939 302.4 H938L938 298.6 H937L937 297.9 H936L936 302.4 H935L935 302.4 H934L934 302.4 H933L933 298.7 H932L932 302.4 H931L931 302.4 H930L930 302.4 H929L929 294.5 H928L928 302.4 H927L927 302.4 H926L926 302.4 H925L925 302.4 H924L924 302.4 H923L923 302.4 H922L922 302.4 H921L921 302.4 H920L920 302.4 H919L919 302.4 H918L918 302.4 H917L917 302.4 H916L916 302.4 H915L915 302.4 H914L914 302.4 H913L913 302.4 H912L912 302.4 H911L911 302.4 H910L910 297.4 H909L909 302.4 H908L908 302.4 H907L907 302.4 H906L906 302.4 H905L905 302.4 H904L904 302.4 H903L903 302.4 H902L902 302.4 H901L901 302.4 H900L900 302.4 H899L899 302.4 H898L898 302.4 H897L897 302.4 H896L896 302.4 H895L895 302.4 H894L894 302.4 H893L893 302.4 H892L892 302.4 H891L891 302.4 H890L890 302.4 H889L889 302.4 H888L888 302.4 H887L887 302.4 H886L886 302.4 H885L885 302.4 H884L884 300.0 H883L883 300.0 H882L882 302.4 H881L881 302.4 H880L880 302.4 H879L879 297.3 H878L878 302.4 H877L877 300.0 H876L876 302.4 H875L875 302.4 H874L874 302.4 H873L873 302.4 H872L872 302.4 H871L871 302.4 H870L870 299.7 H869L869 302.4 H868L868 302.4 H867L867 302.4 H866L866 302.4 H865L865 302.4 H864L864 302.4 H863L863 302.4 H862L862 302.4 H861L861 302.4 H860L860 302.4 H859L859 302.4 H858L858 302.4 H857L857 302.4 H856L856 302.4 H855L855 302.4 H854L854 288.9 H853L853 302.4 H852L852 302.4 H851L851 302.4 H850L850 302.4 H849L849 302.4 H848L848 302.4 H847L847 302.4 H846L846 302.4 H845L845 302.4 H844L844 302.4 H843L843 302.4 H842L842 302.4 H841L841 302.4 H840L840 302.4 H839L839 302.4 H838L838 302.4 H837L837 302.4 H836L836 292.1 H835L835 302.4 H834L834 302.4 H833L833 302.4 H832L832 285.6 H831L831 302.4 H830L830 302.4 H829L829 302.4 H828L828 296.1 H827L827 302.4 H826L826 302.4 H825L825 302.4 H824L824 302.4 H823L823 302.4 H822L822 302.4 H821L821 302.4 H820L820 302.4 H819L819 302.4 H818L818 302.4 H817L817 302.4 H816L816 302.4 H815L815 302.4 H814L814 302.4 H813L813 302.4 H812L812 290.5 H811L811 302.4 H810L810 302.4 H809L809 296.3 H808L808 302.4 H807L807 302.4 H806L806 302.4 H805L805 302.4 H804L804 302.4 H803L803 293.0 H802L802 302.4 H801L801 302.4 H800L800 302.4 H799L799 302.4 H798L798 302.4 H797L797 302.4 H796L796 302.4 H795L795 302.4 H794L794 302.4 H793L793 302.4 H792L792 302.4 H791L791 302.4 H790L790 302.4 H789L789 302.4 H788L788 298.7 H787L787 302.4 H786L786 302.4 H785L785 299.3 H784L784 302.4 H783L783 299.6 H782L782 291.3 H781L781 302.4 H780L780 302.4 H779L779 302.4 H778L778 302.4 H777L777 302.4 H776L776 302.4 H775L775 302.4 H774L774 302.4 H773L773 299.3 H772L772 302.4 H771L771 302.4 H770L770 295.9 H769L769 298.6 H768L768 299.5 H767L767 298.9 H766L766 302.4 H765L765 302.4 H764L764 293.2 H763L763 302.4 H762L762 302.4 H761L761 302.4 H760L760 302.4 H759L759 287.5 H758L758 296.3 H757L757 302.4 H756L756 302.4 H755L755 302.4 H754L754 302.4 H753L753 290.7 H752L752 302.4 H751L751 302.4 H750L750 302.4 H749L749 302.4 H748L748 291.3 H747L747 302.4 H746L746 302.4 H745L745 302.4 H744L744 302.4 H743L743 302.4 H742L742 302.4 H741L741 302.4 H740L740 302.4 H739L739 299.1 H738L738 302.4 H737L737 302.4 H736L736 302.4 H735L735 302.4 H734L734 291.2 H733L733 302.4 H732L732 302.4 H731L731 302.4 H730L730 302.4 H729L729 302.4 H728L728 302.4 H727L727 300.0 H726L726 302.4 H725L725 302.4 H724L724 302.4 H723L723 302.4 H722L722 302.4 H721L721 302.4 H720L720 302.4 H719L719 302.4 H718L718 302.4 H717L717 298.7 H716L716 302.4 H715L715 296.5 H714L714 302.4 H713L713 302.4 H712L712 302.4 H711L711 302.4 H710L710 302.4 H709L709 302.4 H708L708 302.4 H707L707 300.0 H706L706 302.4 H705L705 285.4 H704L704 287.9 H703L703 286.8 H702L702 302.4 H701L701 302.4 H700L700 302.4 H699L699 302.4 H698L698 302.4 H697L697 302.4 H696L696 302.4 H695L695 302.4 H694L694 302.4 H693L693 302.4 H692L692 302.4 H691L691 302.4 H690L690 302.4 H689L689 302.4 H688L688 296.5 H687L687 302.4 H686L686 295.7 H685L685 302.4 H684L684 302.4 H683L683 302.4 H682L682 302.4 H681L681 302.4 H680L680 302.4 H679L679 302.4 H678L678 302.4 H677L677 290.8 H676L676 302.4 H675L675 302.4 H674L674 302.4 H673L673 292.7 H672L672 298.6 H671L671 302.4 H670L670 302.4 H669L669 302.4 H668L668 302.4 H667L667 302.4 H666L666 289.9 H665L665 302.4 H664L664 302.4 H663L663 302.4 H662L662 302.4 H661L661 302.4 H660L660 302.4 H659L659 302.4 H658L658 302.4 H657L657 302.4 H656L656 302.4 H655L655 302.4 H654L654 302.4 H653L653 302.4 H652L652 302.4 H651L651 302.4 H650L650 302.4 H649L649 302.4 H648L648 302.4 H647L647 302.4 H646L646 302.4 H645L645 299.8 H644L644 302.4 H643L643 299.8 H642L642 298.5 H641L641 302.4 H640L640 302.4 H639L639 290.9 H638L638 302.4 H637L637 302.4 H636L636 302.4 H635L635 287.0 H634L634 302.4 H633L633 294.2 H632L632 302.4 H631L631 302.4 H630L630 302.4 H629L629 285.5 H628L628 302.4 H627L627 302.4 H626L626 302.4 H625L625 302.4 H624L624 302.4 H623L623 302.4 H622L622 302.4 H621L621 302.4 H620L620 302.4 H619L619 302.4 H618L618 302.4 H617L617 302.4 H616L616 302.4 H615L615 302.4 H614L614 302.4 H613L613 302.4 H612L612 289.6 H611L611 302.4 H610L610 302.4 H609L609 302.4 H608L608 302.4 H607L607 302.4 H606L606 302.4 H605L605 302.4 H604L604 302.4 H603L603 302.4 H602L602 299.0 H601L601 302.4 H600L600 302.4 H599L599 299.9 H598L598 302.4 H597L597 302.4 H596L596 299.7 H595L595 302.4 H594L594 302.4 H593L593 302.4 H592L592 302.4 H591L591 302.4 H590L590 302.4 H589L589 299.3 H588L588 302.4 H587L587 302.4 H586L586 299.9 H585L585 302.4 H584L584 290.7 H583L583 302.4 H582L582 302.4 H581L581 289.0 H580L580 302.4 H579L579 302.4 H578L578 302.4 H577L577 302.4 H576L576 302.4 H575L575 302.4 H574L574 302.4 H573L573 302.4 H572L572 296.8 H571L571 302.4 H570L570 302.4 H569L569 302.4 H568L568 302.4 H567L567 302.4 H566L566 302.4 H565L565 302.4 H564L564 302.4 H563L563 302.4 H562L562 302.4 H561L561 298.1 H560L560 302.4 H559L559 302.4 H558L558 302.4 H557L557 302.4 H556L556 302.4 H555L555 302.4 H554L554 302.4 H553L553 302.4 H552L552 297.4 H551L551 302.4 H550L550 302.4 H549L549 302.4 H548L548 302.4 H547L547 302.4 H546L546 302.4 H545L545 302.4 H544L544 302.4 H543L543 302.4 H542L542 302.4 H541L541 294.1 H540L540 302.4 H539L539 302.4 H538L538 302.4 H537L537 302.4 H536L536 302.4 H535L535 302.4 H534L534 302.4 H533L533 302.4 H532L532 302.4 H531L531 298.3 H530L530 302.4 H529L529 302.4 H528L528 302.4 H527L527 285.4 H526L526 302.4 H525L525 302.4 H524L524 302.4 H523L523 302.4 H522L522 302.4 H521L521 302.4 H520L520 302.4 H519L519 302.4 H518L518 302.4 H517L517 302.4 H516L516 302.4 H515L515 302.4 H514L514 302.4 H513L513 302.4 H512L512 302.4 H511L511 302.4 H510L510 302.4 H509L509 302.4 H508L508 302.4 H507L507 302.4 H506L506 302.4 H505L505 302.4 H504L504 302.4 H503L503 302.4 H502L502 302.4 H501L501 302.4 H500L500 302.4 H499L499 302.4 H498L498 302.4 H497L497 302.4 H496L496 302.4 H495L495 302.4 H494L494 302.4 H493L493 302.4 H492L492 302.4 H491L491 302.4 H490L490 302.4 H489L489 302.4 H488L488 302.4 H487L487 302.4 H486L486 302.4 H485L485 302.4 H484L484 302.4 H483L483 302.4 H482L482 302.4 H481L481 302.4 H480L480 302.4 H479L479 302.4 H478L478 296.3 H477L477 302.4 H476L476 302.4 H475L475 302.4 H474L474 302.4 H473L473 298.4 H472L472 302.4 H471L471 302.4 H470L470 302.4 H469L469 302.4 H468L468 302.4 H467L467 295.1 H466L466 302.4 H465L465 302.4 H464L464 302.4 H463L463 302.4 H462L462 302.4 H461L461 302.4 H460L460 295.9 H459L459 299.4 H458L458 302.4 H457L457 302.4 H456L456 299.6 H455L455 302.4 H454L454 302.4 H453L453 302.4 H452L452 302.4 H451L451 302.4 H450L450 302.4 H449L449 302.4 H448L448 302.4 H447L447 302.4 H446L446 299.5 H445L445 302.4 H444L444 302.4 H443L443 302.4 H442L442 302.4 H441L441 295.2 H440L440 302.4 H439L439 287.0 H438L438 302.4 H437L437 302.4 H436L436 302.4 H435L435 302.4 H434L434 302.4 H433L433 302.4 H432L432 302.4 H431L431 295.6 H430L430 302.4 H429L429 302.4 H428L428 292.4 H427L427 302.4 H426L426 302.4 H425L425 293.0 H424L424 302.4 H423L423 302.4 H422L422 302.4 H421L421 302.4 H420L420 302.4 H419L419 302.4 H418L418 302.4 H417L417 302.4 H416L416 302.4 H415L415 302.4 H414L414 302.4 H413L413 302.4 H412L412 302.4 H411L411 302.4 H410L410 302.4 H409L409 302.4 H408L408 300.0 H407L407 302.4 H406L406 302.4 H405L405 302.4 H404L404 302.4 H403L403 302.4 H402L402 302.4 H401L401 302.4 H400L400 302.4 H399L399 302.4 H398L398 302.4 H397L397 302.4 H396L396 302.4 H395L395 302.4 H394L394 302.4 H393L393 302.4 H392L392 295.6 H391L391 302.4 H390L390 299.5 H389L389 302.4 H388L388 302.4 H387L387 302.4 H386L386 302.4 H385L385 302.4 H384L384 302.4 H383L383 302.4 H382L382 302.4 H381L381 302.4 H380L380 302.4 H379L379 302.4 H378L378 302.4 H377L377 302.4 H376L376 302.4 H375L375 302.4 H374L374 296.4 H373L373 302.4 H372L372 302.4 H371L371 302.4 H370L370 302.4 H369L369 298.3 H368L368 302.4 H367L367 302.4 H366L366 302.4 H365L365 302.4 H364L364 297.8 H363L363 297.3 H362L362 302.4 H361L361 302.4 H360L360 302.4 H359L359 302.4 H358L358 302.4 H357L357 302.4 H356L356 302.4 H355L355 302.4 H354L354 302.4 H353L353 302.4 H352L352 302.4 H351L351 302.4 H350L350 302.4 H349L349 302.4 H348L348 302.4 H347L347 298.6 H346L346 299.7 H345L345 297.7 H344L344 302.4 H343L343 288.4 H342L342 298.5 H341L341 302.4 H340L340 302.4 H339L339 302.4 H338L338 302.4 H337L337 302.4 H336L336 302.4 H335L335 302.4 H334L334 292.9 H333L333 302.4 H332L332 302.4 H331L331 302.4 H330L330 302.4 H329L329 276.6 H328L328 275.9 H327L327 273.8 H326L326 274.6 H325L325 270.8 H324L324 272.1 H323L323 271.3 H322L322 270.4 H321L321 266.0 H320L320 268.7 H319L319 269.3 H318L318 269.7 H317L317 274.6 H316L316 271.7 H315L315 271.4 H314L314 269.5 H313L313 272.5 H312L312 269.9 H311L311 272.7 H310L310 276.0 H309L309 271.9 H308L308 273.2 H307L307 273.5 H306L306 269.4 H305L305 271.4 H304L304 271.9 H303L303 273.1 H302L302 275.0 H301L301 278.5 H300L300 271.9 H299L299 276.6 H298L298 276.5 H297L297 278.2 H296L296 268.0 H295L295 268.0 H294L294 265.5 H293L293 265.5 H292L292 268.3 H291L291 268.4 H290L290 270.2 H289L289 271.2 H288L288 271.6 H287L287 268.5 H286L286 271.2 H285L285 272.1 H284L284 269.4 H283L283 266.4 H282L282 265.1 H281L281 268.0 H280L280 268.5 H279L279 271.5 H278L278 266.8 H277L277 266.7 H276L276 265.8 H275L275 269.0 H274L274 269.3 H273L273 269.0 H272L272 267.4 H271L271 265.6 H270L270 262.5 H269L269 261.0 H268L268 262.1 H267L267 267.0 H266L266 260.9 H265L265 265.5 H264L264 267.5 H263L263 266.6 H262L262 264.3 H261L261 262.2 H260L260 264.7 H259L259 261.3 H258L258 261.4 H257L257 264.6 H256L256 265.6 H255L255 266.5 H254L254 268.1 H253L253 262.5 H252L252 259.4 H251L251 262.5 H250L250 263.9 H249L249 268.3 H248L248 265.9 H247L247 269.3 H246L246 266.6 H245L245 267.2 H244L244 267.7 H243L243 264.0 H242L242 267.4 H241L241 267.5 H240L240 266.9 H239L239 267.9 H238L238 271.0 H237L237 269.6 H236L236 265.1 H235L235 265.4 H234L234 263.1 H233L233 261.2 H232L232 268.5 H231L231 260.6 H230L230 260.9 H229L229 260.6 H228L228 258.1 H227L227 256.9 H226L226 261.4 H225L225 260.3 H224L224 263.5 H223L223 262.4 H222L222 261.1 H221L221 260.8 H220L220 257.5 H219L219 258.3 H218L218 259.4 H217L217 258.6 H216L216 261.2 H215L215 259.1 H214L214 258.7 H213L213 256.5 H212L212 256.1 H211L211 256.2 H210L210 254.9 H209L209 254.5 H208L208 254.0 H207L207 254.3 H206L206 253.3 H205L205 253.2 H204L204 253.0 H203L203 253.0 H202L202 254.8 H201L201 259.1 H200L200 255.5 H199L199 257.1 H198L198 256.9 H197L197 256.5 H196L196 256.2 H195L195 256.0 H194L194 255.7 H193L193 255.3 H192L192 254.8 H191L191 254.0 H190L190 251.6 H189L189 252.0 H188L188 250.2 H187L187 251.3 H185.4Z" fill="#7171e2"/><path d="M185.4 375.4L185.4 341.5 H187L187 349.8 H188L188 351.1 H189L189 344.3 H190L190 351.7 H191L191 352.2 H192L192 351.6 H193L193 351.5 H194L194 351.0 H195L195 349.2 H196L196 349.2 H197L197 347.7 H198L198 343.7 H199L199 348.9 H200L200 348.7 H201L201 348.7 H202L202 348.7 H203L203 348.8 H204L204 347.4 H205L205 348.3 H206L206 346.7 H207L207 350.5 H208L208 346.2 H209L209 350.2 H210L210 350.6 H211L211 346.6 H212L212 350.8 H213L213 349.9 H214L214 344.6 H215L215 347.3 H216L216 343.9 H217L217 343.2 H218L218 342.5 H219L219 338.9 H220L220 344.9 H221L221 345.9 H222L222 345.4 H223L223 346.4 H224L224 345.9 H225L225 349.7 H226L226 350.1 H227L227 349.7 H228L228 348.9 H229L229 349.7 H230L230 348.5 H231L231 350.2 H232L232 349.8 H233L233 348.7 H234L234 345.6 H235L235 348.6 H236L236 337.6 H237L237 344.5 H238L238 343.5 H239L239 349.5 H240L240 349.3 H241L241 350.5 H242L242 348.2 H243L243 350.0 H244L244 346.9 H245L245 349.0 H246L246 347.8 H247L247 347.6 H248L248 349.2 H249L249 351.4 H250L250 354.2 H251L251 357.2 H252L252 354.9 H253L253 351.1 H254L254 352.3 H255L255 348.6 H256L256 350.5 H257L257 351.0 H258L258 353.0 H259L259 351.7 H260L260 349.0 H261L261 343.6 H262L262 347.1 H263L263 347.6 H264L264 347.8 H265L265 348.0 H266L266 347.6 H267L267 346.7 H268L268 350.9 H269L269 353.1 H270L270 347.1 H271L271 345.1 H272L272 346.1 H273L273 346.1 H274L274 349.4 H275L275 352.7 H276L276 354.1 H277L277 351.5 H278L278 351.6 H279L279 350.2 H280L280 347.0 H281L281 350.2 H282L282 347.7 H283L283 349.1 H284L284 346.4 H285L285 350.5 H286L286 352.3 H287L287 352.4 H288L288 350.0 H289L289 351.4 H290L290 349.8 H291L291 350.0 H292L292 351.0 H293L293 349.3 H294L294 346.3 H295L295 351.2 H296L296 352.1 H297L297 343.4 H298L298 348.5 H299L299 345.7 H300L300 341.8 H301L301 347.2 H302L302 341.8 H303L303 352.4 H304L304 352.1 H305L305 352.8 H306L306 352.3 H307L307 352.4 H308L308 350.9 H309L309 349.7 H310L310 349.7 H311L311 347.5 H312L312 342.0 H313L313 344.4 H314L314 348.3 H315L315 350.2 H316L316 352.7 H317L317 349.9 H318L318 349.7 H319L319 345.7 H320L320 346.9 H321L321 346.9 H322L322 352.3 H323L323 352.8 H324L324 350.3 H325L325 348.6 H326L326 348.8 H327L327 348.4 H328L328 351.0 H329L329 313.5 H330L330 309.0 H331L331 309.0 H332L332 309.0 H333L333 309.0 H334L334 309.0 H335L335 309.0 H336L336 309.0 H337L337 309.0 H338L338 309.0 H339L339 313.7 H340L340 309.0 H341L341 309.0 H342L342 309.0 H343L343 309.0 H344L344 309.0 H345L345 316.4 H346L346 312.0 H347L347 309.0 H348L348 309.0 H349L349 309.0 H350L350 309.0 H351L351 309.0 H352L352 309.0 H353L353 309.0 H354L354 309.0 H355L355 309.0 H356L356 309.0 H357L357 309.0 H358L358 315.2 H359L359 309.0 H360L360 325.3 H361L361 309.0 H362L362 309.0 H363L363 309.0 H364L364 309.0 H365L365 309.0 H366L366 324.3 H367L367 309.0 H368L368 309.0 H369L369 309.0 H370L370 309.0 H371L371 309.0 H372L372 309.0 H373L373 309.0 H374L374 309.0 H375L375 309.0 H376L376 309.0 H377L377 309.0 H378L378 309.0 H379L379 309.0 H380L380 309.0 H381L381 309.0 H382L382 309.0 H383L383 309.0 H384L384 309.0 H385L385 309.0 H386L386 309.0 H387L387 309.0 H388L388 309.0 H389L389 309.0 H390L390 309.0 H391L391 315.2 H392L392 309.0 H393L393 309.0 H394L394 309.0 H395L395 309.0 H396L396 309.0 H397L397 309.0 H398L398 309.0 H399L399 309.0 H400L400 309.0 H401L401 309.0 H402L402 309.0 H403L403 309.0 H404L404 309.0 H405L405 309.0 H406L406 309.0 H407L407 309.0 H408L408 309.0 H409L409 309.0 H410L410 315.5 H411L411 309.0 H412L412 309.0 H413L413 315.5 H414L414 309.0 H415L415 309.0 H416L416 309.0 H417L417 316.7 H418L418 309.0 H419L419 312.0 H420L420 311.5 H421L421 309.0 H422L422 309.0 H423L423 309.0 H424L424 309.0 H425L425 309.0 H426L426 316.1 H427L427 309.0 H428L428 309.0 H429L429 309.0 H430L430 309.0 H431L431 309.0 H432L432 309.0 H433L433 309.0 H434L434 309.0 H435L435 309.0 H436L436 309.0 H437L437 309.0 H438L438 309.0 H439L439 309.0 H440L440 315.4 H441L441 309.0 H442L442 309.0 H443L443 309.0 H444L444 309.0 H445L445 309.0 H446L446 309.0 H447L447 309.0 H448L448 309.0 H449L449 314.5 H450L450 309.0 H451L451 309.0 H452L452 309.0 H453L453 309.0 H454L454 314.0 H455L455 309.0 H456L456 309.0 H457L457 309.0 H458L458 309.0 H459L459 309.0 H460L460 309.0 H461L461 312.3 H462L462 314.5 H463L463 309.0 H464L464 309.0 H465L465 309.0 H466L466 309.0 H467L467 309.0 H468L468 309.0 H469L469 309.0 H470L470 314.9 H471L471 309.0 H472L472 309.0 H473L473 315.6 H474L474 309.0 H475L475 309.0 H476L476 309.0 H477L477 309.0 H478L478 309.0 H479L479 309.0 H480L480 312.3 H481L481 316.6 H482L482 309.0 H483L483 309.0 H484L484 309.0 H485L485 309.0 H486L486 309.0 H487L487 309.0 H488L488 309.0 H489L489 309.0 H490L490 309.0 H491L491 309.0 H492L492 312.5 H493L493 309.0 H494L494 309.0 H495L495 309.0 H496L496 309.0 H497L497 309.0 H498L498 309.0 H499L499 309.0 H500L500 309.0 H501L501 318.3 H502L502 309.0 H503L503 309.0 H504L504 314.0 H505L505 323.1 H506L506 309.0 H507L507 309.0 H508L508 309.0 H509L509 309.0 H510L510 309.0 H511L511 309.0 H512L512 309.0 H513L513 309.0 H514L514 309.0 H515L515 309.0 H516L516 309.0 H517L517 309.0 H518L518 309.0 H519L519 309.0 H520L520 309.0 H521L521 309.0 H522L522 309.0 H523L523 309.0 H524L524 309.0 H525L525 317.3 H526L526 323.3 H527L527 309.0 H528L528 309.0 H529L529 309.0 H530L530 309.0 H531L531 309.0 H532L532 309.0 H533L533 309.0 H534L534 309.0 H535L535 309.0 H536L536 309.0 H537L537 318.8 H538L538 309.0 H539L539 309.0 H540L540 309.0 H541L541 309.0 H542L542 309.0 H543L543 309.0 H544L544 309.0 H545L545 309.0 H546L546 309.0 H547L547 309.0 H548L548 318.3 H549L549 309.0 H550L550 309.0 H551L551 309.0 H552L552 309.0 H553L553 309.0 H554L554 309.0 H555L555 309.0 H556L556 309.0 H557L557 309.0 H558L558 309.0 H559L559 309.0 H560L560 309.0 H561L561 309.0 H562L562 309.0 H563L563 309.0 H564L564 309.0 H565L565 309.0 H566L566 309.0 H567L567 309.0 H568L568 309.0 H569L569 309.0 H570L570 313.9 H571L571 309.0 H572L572 309.0 H573L573 311.9 H574L574 309.0 H575L575 309.0 H576L576 309.0 H577L577 309.0 H578L578 309.0 H579L579 309.0 H580L580 325.0 H581L581 309.0 H582L582 309.0 H583L583 309.0 H584L584 309.0 H585L585 309.0 H586L586 309.0 H587L587 309.0 H588L588 309.0 H589L589 309.0 H590L590 326.1 H591L591 309.0 H592L592 309.0 H593L593 309.0 H594L594 323.1 H595L595 309.0 H596L596 309.0 H597L597 309.0 H598L598 309.0 H599L599 309.0 H600L600 309.0 H601L601 309.0 H602L602 309.0 H603L603 309.0 H604L604 309.0 H605L605 309.0 H606L606 309.0 H607L607 309.0 H608L608 309.0 H609L609 311.6 H610L610 309.0 H611L611 314.5 H612L612 312.1 H613L613 309.0 H614L614 309.0 H615L615 309.0 H616L616 309.0 H617L617 309.0 H618L618 311.5 H619L619 309.0 H620L620 309.0 H621L621 309.0 H622L622 311.5 H623L623 318.1 H624L624 309.0 H625L625 309.0 H626L626 309.0 H627L627 309.0 H628L628 309.0 H629L629 311.5 H630L630 309.0 H631L631 314.4 H632L632 321.1 H633L633 315.6 H634L634 309.0 H635L635 309.0 H636L636 309.0 H637L637 309.0 H638L638 309.0 H639L639 309.0 H640L640 309.0 H641L641 309.0 H642L642 309.0 H643L643 309.0 H644L644 309.0 H645L645 309.0 H646L646 311.8 H647L647 311.9 H648L648 309.0 H649L649 312.9 H650L650 309.0 H651L651 309.0 H652L652 316.8 H653L653 309.0 H654L654 326.1 H655L655 317.1 H656L656 324.3 H657L657 312.0 H658L658 309.0 H659L659 309.0 H660L660 309.0 H661L661 309.0 H662L662 309.0 H663L663 315.8 H664L664 309.0 H665L665 309.0 H666L666 311.4 H667L667 309.0 H668L668 309.0 H669L669 309.0 H670L670 309.0 H671L671 309.0 H672L672 311.4 H673L673 309.0 H674L674 309.0 H675L675 309.0 H676L676 309.0 H677L677 309.0 H678L678 309.0 H679L679 309.0 H680L680 315.0 H681L681 309.0 H682L682 311.5 H683L683 309.0 H684L684 309.0 H685L685 309.0 H686L686 314.8 H687L687 309.0 H688L688 309.0 H689L689 309.0 H690L690 311.8 H691L691 325.2 H692L692 309.0 H693L693 309.0 H694L694 322.8 H695L695 309.0 H696L696 309.0 H697L697 309.0 H698L698 312.2 H699L699 309.0 H700L700 309.0 H701L701 309.0 H702L702 309.0 H703L703 309.0 H704L704 309.0 H705L705 309.0 H706L706 309.0 H707L707 309.0 H708L708 309.0 H709L709 309.0 H710L710 309.0 H711L711 314.0 H712L712 309.0 H713L713 319.3 H714L714 309.0 H715L715 309.0 H716L716 311.6 H717L717 309.0 H718L718 309.0 H719L719 309.0 H720L720 309.0 H721L721 309.0 H722L722 309.0 H723L723 309.0 H724L724 309.0 H725L725 309.0 H726L726 309.0 H727L727 309.0 H728L728 309.0 H729L729 312.8 H730L730 309.0 H731L731 309.0 H732L732 309.0 H733L733 309.0 H734L734 309.0 H735L735 309.0 H736L736 309.0 H737L737 319.3 H738L738 309.0 H739L739 309.0 H740L740 309.0 H741L741 309.0 H742L742 309.0 H743L743 309.0 H744L744 317.2 H745L745 309.0 H746L746 309.0 H747L747 309.0 H748L748 309.0 H749L749 309.0 H750L750 309.0 H751L751 309.0 H752L752 309.0 H753L753 309.0 H754L754 309.0 H755L755 312.5 H756L756 309.0 H757L757 309.0 H758L758 309.0 H759L759 309.0 H760L760 311.7 H761L761 309.0 H762L762 309.0 H763L763 309.0 H764L764 311.4 H765L765 309.0 H766L766 309.0 H767L767 309.0 H768L768 309.0 H769L769 309.0 H770L770 309.0 H771L771 314.9 H772L772 309.0 H773L773 312.2 H774L774 309.0 H775L775 309.0 H776L776 309.0 H777L777 324.0 H778L778 309.0 H779L779 318.9 H780L780 309.0 H781L781 309.0 H782L782 309.0 H783L783 309.0 H784L784 309.0 H785L785 309.0 H786L786 309.0 H787L787 309.0 H788L788 309.0 H789L789 309.0 H790L790 309.0 H791L791 309.0 H792L792 309.0 H793L793 311.6 H794L794 309.0 H795L795 309.0 H796L796 309.0 H797L797 309.0 H798L798 309.0 H799L799 309.0 H800L800 309.0 H801L801 309.0 H802L802 309.0 H803L803 309.0 H804L804 309.0 H805L805 309.0 H806L806 309.0 H807L807 309.0 H808L808 309.0 H809L809 309.0 H810L810 309.0 H811L811 309.0 H812L812 309.0 H813L813 309.0 H814L814 309.0 H815L815 323.0 H816L816 309.0 H817L817 309.0 H818L818 309.0 H819L819 309.0 H820L820 314.0 H821L821 309.0 H822L822 309.0 H823L823 309.0 H824L824 322.7 H825L825 311.6 H826L826 309.0 H827L827 309.0 H828L828 309.0 H829L829 309.0 H830L830 309.0 H831L831 309.0 H832L832 309.0 H833L833 309.0 H834L834 309.0 H835L835 309.0 H836L836 309.0 H837L837 309.0 H838L838 309.0 H839L839 309.0 H840L840 309.0 H841L841 309.0 H842L842 309.0 H843L843 309.0 H844L844 309.0 H845L845 309.0 H846L846 309.0 H847L847 312.3 H848L848 309.0 H849L849 309.0 H850L850 309.0 H851L851 309.0 H852L852 309.0 H853L853 309.0 H854L854 309.0 H855L855 309.0 H856L856 309.0 H857L857 324.4 H858L858 309.0 H859L859 309.0 H860L860 309.0 H861L861 309.0 H862L862 309.0 H863L863 309.0 H864L864 315.2 H865L865 309.0 H866L866 309.0 H867L867 309.0 H868L868 315.5 H869L869 309.0 H870L870 309.0 H871L871 309.0 H872L872 309.0 H873L873 311.5 H874L874 309.0 H875L875 309.0 H876L876 309.0 H877L877 309.0 H878L878 309.0 H879L879 309.0 H880L880 309.0 H881L881 320.1 H882L882 309.0 H883L883 309.0 H884L884 309.0 H885L885 309.0 H886L886 309.0 H887L887 309.0 H888L888 309.0 H889L889 309.0 H890L890 309.0 H891L891 309.0 H892L892 313.3 H893L893 309.0 H894L894 309.0 H895L895 309.0 H896L896 311.4 H897L897 309.0 H898L898 309.0 H899L899 309.0 H900L900 309.0 H901L901 311.5 H902L902 309.0 H903L903 309.0 H904L904 322.2 H905L905 319.5 H906L906 309.0 H907L907 309.0 H908L908 309.0 H909L909 309.0 H910L910 309.0 H911L911 316.9 H912L912 309.0 H913L913 309.0 H914L914 326.0 H915L915 309.0 H916L916 309.0 H917L917 309.0 H918L918 311.6 H919L919 309.0 H920L920 309.0 H921L921 309.0 H922L922 309.0 H923L923 309.0 H924L924 309.0 H925L925 309.0 H926L926 309.0 H927L927 309.0 H928L928 311.9 H929L929 309.0 H930L930 309.0 H931L931 309.0 H932L932 309.0 H933L933 309.0 H934L934 309.0 H935L935 315.3 H936L936 309.0 H937L937 316.1 H938L938 309.0 H939L939 314.2 H940L940 309.0 H941L941 309.0 H942L942 309.0 H943L943 309.0 H944L944 324.0 H945L945 309.0 H946L946 312.4 H947L947 309.0 H948L948 309.0 H949L949 309.0 H950L950 309.0 H951L951 309.0 H952L952 312.4 H953L953 309.0 H954L954 309.0 H955L955 309.0 H956L956 309.0 H957L957 309.0 H958L958 314.2 H959L959 309.0 H960L960 309.0 H961L961 309.0 H962L962 309.0 H963L963 309.0 H964L964 311.5 H965L965 309.0 H966L966 309.0 H967L967 309.0 H968L968 309.0 H969L969 309.0 H970L970 309.0 H971L971 309.0 H972L972 311.7 H973L973 312.7 H974L974 309.0 H975L975 309.0 H976L976 309.0 H977L977 309.0 H978L978 309.0 H979L979 309.0 H980L980 309.0 H981L981 309.0 H982L982 309.0 H983L983 309.0 H984L984 309.0 H985L985 320.1 H986L986 309.0 H987L987 309.0 H988L988 309.0 H989L989 309.0 H990L990 309.0 H991L991 309.0 H992L992 309.0 H993L993 309.0 H994L994 309.0 H995L995 311.5 H996L996 309.0 H997L997 309.0 H998L998 309.0 H999L999 309.0 H1000L1000 309.0 H1001L1001 309.0 H1002L1002 323.0 H1003L1003 309.0 H1004L1004 313.1 H1005L1005 309.0 H1006L1006 309.0 H1007L1007 309.0 H1008L1008 309.0 H1009L1009 315.3 H1010L1010 315.7 H1011L1011 309.0 H1012L1012 309.0 H1013L1013 312.6 H1014L1014 309.0 H1015L1015 309.0 H1016L1016 309.0 H1017L1017 309.0 H1018L1018 309.0 H1019L1019 309.0 H1020L1020 309.0 H1021L1021 309.0 H1022L1022 309.0 H1023L1023 323.6 H1024L1024 312.1 H1025L1025 309.0 H1026L1026 325.4 H1027L1027 309.0 H1028L1028 309.0 H1029L1029 313.7 H1030L1030 309.0 H1031L1031 309.0 H1032L1032 309.0 H1033L1033 309.0 H1034L1034 309.0 H1035L1035 309.0 H1036L1036 309.0 H1037L1037 312.2 H1038L1038 318.4 H1039L1039 309.0 H1040L1040 315.2 H1041L1041 309.0 H1042L1042 309.0 H1043L1043 309.0 H1044L1044 309.0 H1045L1045 309.0 H1046L1046 309.0 H1047L1047 309.0 H1048L1048 311.5 H1049L1049 309.0 H1050L1050 309.0 H1051L1051 309.0 H1052L1052 309.0 H1053L1053 309.0 H1054L1054 309.0 H1055L1055 309.0 H1056L1056 309.0 H1057L1057 309.0 H1058L1058 309.0 H1059L1059 309.0 H1060L1060 309.0 H1061L1061 309.0 H1062L1062 318.0 H1063L1063 309.0 H1064L1064 309.0 H1065L1065 309.0 H1066L1066 309.0 H1067L1067 309.0 H1068L1068 309.0 H1069L1069 309.0 H1070L1070 309.0 H1071L1071 309.0 H1072L1072 309.0 H1073L1073 309.0 H1074L1074 309.0 H1075L1075 309.0 H1076L1076 309.0 H1077L1077 311.4 H1078L1078 309.0 H1079L1079 309.0 H1080L1080 309.0 H1081L1081 309.0 H1082L1082 309.0 H1083L1083 309.0 H1084L1084 311.5 H1085L1085 309.0 H1086L1086 309.0 H1087L1087 309.0 H1088L1088 309.0 H1089L1089 309.0 H1090L1090 312.1 H1091L1091 322.6 H1092L1092 309.0 H1093L1093 309.0 H1094L1094 309.0 H1095L1095 309.0 H1096L1096 324.1 H1097L1097 309.0 H1098L1098 309.0 H1099L1099 309.0 H1100L1100 309.0 H1101L1101 309.0 H1102L1102 309.0 H1103L1103 309.0 H1104L1104 309.0 H1105L1105 324.7 H1106L1106 309.0 H1107L1107 314.1 H1108L1108 309.0 H1109L1109 309.0 H1110L1110 331.8 H1111L1111 321.7 H1112L1112 309.0 H1113L1113 309.0 H1114L1114 325.6 H1115L1115 309.0 H1116L1116 309.0 H1117L1117 309.0 H1118L1118 328.4 H1119L1119 309.0 H1120L1120 309.0 H1121L1121 309.0 H1122L1122 309.0 H1123L1123 309.0 H1124L1124 311.6 H1125L1125 309.0 H1126L1126 330.4 H1127L1127 336.8 H1128L1128 309.0 H1129L1129 333.9 H1130L1130 309.0 H1131L1131 335.6 H1132L1132 315.2 H1133L1133 309.0 H1134L1134 335.9 H1135L1135 309.0 H1136L1136 320.1 H1137L1137 321.8 H1138L1138 315.9 H1139L1139 331.0 H1140L1140 309.0 H1141L1141 312.2 H1142L1142 315.9 H1143L1143 322.3 H1144L1144 322.8 H1145L1145 311.8 H1146L1146 329.6 H1147L1147 312.5 H1148L1148 315.8 H1149L1149 312.0 H1150L1150 315.7 H1151L1151 309.0 H1152L1152 309.0 H1153L1153 309.0 H1154L1154 326.1 H1155L1155 316.8 H1156L1156 315.7 H1157L1157 332.4 H1158L1158 309.0 H1159L1159 309.0 H1160L1160 316.8 H1161L1161 331.5 H1162L1162 318.2 H1163V375.4L1163 414.5 H1162L1162 441.8 H1161L1161 421.6 H1160L1160 441.8 H1159L1159 435.3 H1158L1158 431.2 H1157L1157 431.4 H1156L1156 417.2 H1155L1155 436.5 H1154L1154 416.6 H1153L1153 439.0 H1152L1152 431.5 H1151L1151 441.8 H1150L1150 414.7 H1149L1149 425.9 H1148L1148 441.8 H1147L1147 441.8 H1146L1146 434.5 H1145L1145 438.7 H1144L1144 413.4 H1143L1143 436.0 H1142L1142 430.7 H1141L1141 430.9 H1140L1140 439.4 H1139L1139 414.8 H1138L1138 441.8 H1137L1137 419.1 H1136L1136 437.5 H1135L1135 441.8 H1134L1134 441.8 H1133L1133 441.8 H1132L1132 428.1 H1131L1131 441.8 H1130L1130 427.1 H1129L1129 413.0 H1128L1128 435.8 H1127L1127 441.8 H1126L1126 441.8 H1125L1125 441.8 H1124L1124 441.8 H1123L1123 441.8 H1122L1122 441.8 H1121L1121 439.1 H1120L1120 441.8 H1119L1119 441.8 H1118L1118 419.9 H1117L1117 441.8 H1116L1116 441.8 H1115L1115 429.5 H1114L1114 439.1 H1113L1113 439.4 H1112L1112 441.8 H1111L1111 425.1 H1110L1110 441.8 H1109L1109 441.8 H1108L1108 441.8 H1107L1107 441.8 H1106L1106 441.8 H1105L1105 438.9 H1104L1104 441.8 H1103L1103 441.8 H1102L1102 441.8 H1101L1101 428.5 H1100L1100 441.8 H1099L1099 436.7 H1098L1098 441.8 H1097L1097 441.8 H1096L1096 441.8 H1095L1095 441.8 H1094L1094 441.8 H1093L1093 433.4 H1092L1092 441.8 H1091L1091 434.1 H1090L1090 441.8 H1089L1089 429.6 H1088L1088 441.8 H1087L1087 427.9 H1086L1086 426.3 H1085L1085 441.8 H1084L1084 441.8 H1083L1083 441.8 H1082L1082 439.3 H1081L1081 441.8 H1080L1080 434.4 H1079L1079 441.8 H1078L1078 441.8 H1077L1077 441.8 H1076L1076 441.8 H1075L1075 441.8 H1074L1074 438.7 H1073L1073 441.8 H1072L1072 441.8 H1071L1071 441.8 H1070L1070 441.8 H1069L1069 429.7 H1068L1068 441.8 H1067L1067 441.8 H1066L1066 441.8 H1065L1065 430.0 H1064L1064 441.8 H1063L1063 441.8 H1062L1062 441.8 H1061L1061 441.8 H1060L1060 441.8 H1059L1059 441.8 H1058L1058 441.8 H1057L1057 441.8 H1056L1056 441.8 H1055L1055 441.8 H1054L1054 441.8 H1053L1053 441.8 H1052L1052 441.8 H1051L1051 441.8 H1050L1050 441.8 H1049L1049 441.8 H1048L1048 441.8 H1047L1047 441.8 H1046L1046 441.8 H1045L1045 441.8 H1044L1044 436.2 H1043L1043 441.8 H1042L1042 441.8 H1041L1041 441.8 H1040L1040 441.8 H1039L1039 441.8 H1038L1038 439.3 H1037L1037 441.8 H1036L1036 441.8 H1035L1035 441.8 H1034L1034 441.8 H1033L1033 441.8 H1032L1032 441.8 H1031L1031 432.1 H1030L1030 441.8 H1029L1029 441.8 H1028L1028 441.8 H1027L1027 441.8 H1026L1026 441.8 H1025L1025 441.8 H1024L1024 441.8 H1023L1023 441.8 H1022L1022 441.8 H1021L1021 441.8 H1020L1020 441.8 H1019L1019 441.8 H1018L1018 441.8 H1017L1017 441.8 H1016L1016 441.8 H1015L1015 441.8 H1014L1014 441.8 H1013L1013 441.8 H1012L1012 441.8 H1011L1011 441.8 H1010L1010 441.8 H1009L1009 441.8 H1008L1008 441.8 H1007L1007 441.8 H1006L1006 441.8 H1005L1005 441.8 H1004L1004 430.8 H1003L1003 441.8 H1002L1002 438.0 H1001L1001 441.8 H1000L1000 441.8 H999L999 441.8 H998L998 441.8 H997L997 441.8 H996L996 441.8 H995L995 441.8 H994L994 441.8 H993L993 441.8 H992L992 441.8 H991L991 441.8 H990L990 441.8 H989L989 441.8 H988L988 441.8 H987L987 441.8 H986L986 441.8 H985L985 441.8 H984L984 441.8 H983L983 441.8 H982L982 441.8 H981L981 441.8 H980L980 441.8 H979L979 430.8 H978L978 441.8 H977L977 441.8 H976L976 441.8 H975L975 441.8 H974L974 432.6 H973L973 441.8 H972L972 441.8 H971L971 441.8 H970L970 441.8 H969L969 441.8 H968L968 441.8 H967L967 441.8 H966L966 441.8 H965L965 441.8 H964L964 441.8 H963L963 441.8 H962L962 441.8 H961L961 441.8 H960L960 441.8 H959L959 441.8 H958L958 441.8 H957L957 441.8 H956L956 441.8 H955L955 441.8 H954L954 441.8 H953L953 441.8 H952L952 441.8 H951L951 439.0 H950L950 437.7 H949L949 441.8 H948L948 441.8 H947L947 441.8 H946L946 441.8 H945L945 435.1 H944L944 441.8 H943L943 430.8 H942L942 441.8 H941L941 441.8 H940L940 441.8 H939L939 441.8 H938L938 431.0 H937L937 441.8 H936L936 441.8 H935L935 441.8 H934L934 441.8 H933L933 428.1 H932L932 441.8 H931L931 441.8 H930L930 425.7 H929L929 441.8 H928L928 441.8 H927L927 441.8 H926L926 441.8 H925L925 441.8 H924L924 432.5 H923L923 441.8 H922L922 441.8 H921L921 441.8 H920L920 441.8 H919L919 441.8 H918L918 441.8 H917L917 441.8 H916L916 441.8 H915L915 433.1 H914L914 441.8 H913L913 441.8 H912L912 441.8 H911L911 441.8 H910L910 441.8 H909L909 441.8 H908L908 441.8 H907L907 441.8 H906L906 441.8 H905L905 441.8 H904L904 441.8 H903L903 441.8 H902L902 441.8 H901L901 441.8 H900L900 441.8 H899L899 425.2 H898L898 441.8 H897L897 428.1 H896L896 425.0 H895L895 441.8 H894L894 441.8 H893L893 441.8 H892L892 441.8 H891L891 441.8 H890L890 441.8 H889L889 441.8 H888L888 441.8 H887L887 439.1 H886L886 439.2 H885L885 441.8 H884L884 441.8 H883L883 441.8 H882L882 441.8 H881L881 441.8 H880L880 441.8 H879L879 439.2 H878L878 424.7 H877L877 441.8 H876L876 441.8 H875L875 441.8 H874L874 438.2 H873L873 441.8 H872L872 441.8 H871L871 441.8 H870L870 441.8 H869L869 441.8 H868L868 441.8 H867L867 441.8 H866L866 441.8 H865L865 441.8 H864L864 437.4 H863L863 441.8 H862L862 441.8 H861L861 441.8 H860L860 441.8 H859L859 441.8 H858L858 441.8 H857L857 441.8 H856L856 441.8 H855L855 441.8 H854L854 431.0 H853L853 441.8 H852L852 441.8 H851L851 431.1 H850L850 434.3 H849L849 441.8 H848L848 441.8 H847L847 441.8 H846L846 441.8 H845L845 441.8 H844L844 441.8 H843L843 441.8 H842L842 441.8 H841L841 437.3 H840L840 441.8 H839L839 441.8 H838L838 441.8 H837L837 441.8 H836L836 441.8 H835L835 441.8 H834L834 441.8 H833L833 441.8 H832L832 441.8 H831L831 441.8 H830L830 441.8 H829L829 441.8 H828L828 431.5 H827L827 441.8 H826L826 441.8 H825L825 441.8 H824L824 441.8 H823L823 441.8 H822L822 439.2 H821L821 439.4 H820L820 441.8 H819L819 441.8 H818L818 441.8 H817L817 441.8 H816L816 441.8 H815L815 441.8 H814L814 441.8 H813L813 441.8 H812L812 441.8 H811L811 441.8 H810L810 441.8 H809L809 441.8 H808L808 441.8 H807L807 441.8 H806L806 441.8 H805L805 441.8 H804L804 441.8 H803L803 441.8 H802L802 441.8 H801L801 441.8 H800L800 441.8 H799L799 441.8 H798L798 441.8 H797L797 441.8 H796L796 441.8 H795L795 432.1 H794L794 429.4 H793L793 427.1 H792L792 436.2 H791L791 441.8 H790L790 441.8 H789L789 441.8 H788L788 441.8 H787L787 435.6 H786L786 441.8 H785L785 441.8 H784L784 441.8 H783L783 441.8 H782L782 441.8 H781L781 441.8 H780L780 425.1 H779L779 441.8 H778L778 441.8 H777L777 441.8 H776L776 441.8 H775L775 441.8 H774L774 441.8 H773L773 441.8 H772L772 441.8 H771L771 441.8 H770L770 441.8 H769L769 441.8 H768L768 441.8 H767L767 441.8 H766L766 441.8 H765L765 441.8 H764L764 432.0 H763L763 441.8 H762L762 441.8 H761L761 438.5 H760L760 439.0 H759L759 441.8 H758L758 441.8 H757L757 441.8 H756L756 441.8 H755L755 441.8 H754L754 441.8 H753L753 441.8 H752L752 441.8 H751L751 441.8 H750L750 441.8 H749L749 441.8 H748L748 441.8 H747L747 441.8 H746L746 441.8 H745L745 441.8 H744L744 441.8 H743L743 441.8 H742L742 441.8 H741L741 441.8 H740L740 433.7 H739L739 437.5 H738L738 441.8 H737L737 438.9 H736L736 441.8 H735L735 441.8 H734L734 441.8 H733L733 441.8 H732L732 441.8 H731L731 441.8 H730L730 441.8 H729L729 441.8 H728L728 441.8 H727L727 441.8 H726L726 441.8 H725L725 441.8 H724L724 441.8 H723L723 441.8 H722L722 441.8 H721L721 441.8 H720L720 438.7 H719L719 441.8 H718L718 441.8 H717L717 441.8 H716L716 441.8 H715L715 441.8 H714L714 441.8 H713L713 441.8 H712L712 441.8 H711L711 441.8 H710L710 441.8 H709L709 441.8 H708L708 441.8 H707L707 441.8 H706L706 441.8 H705L705 441.8 H704L704 441.8 H703L703 441.8 H702L702 441.8 H701L701 441.8 H700L700 441.8 H699L699 441.8 H698L698 441.8 H697L697 427.9 H696L696 441.8 H695L695 435.9 H694L694 441.8 H693L693 441.8 H692L692 441.8 H691L691 439.3 H690L690 441.8 H689L689 441.8 H688L688 441.8 H687L687 441.8 H686L686 441.8 H685L685 441.8 H684L684 441.8 H683L683 441.8 H682L682 441.8 H681L681 441.8 H680L680 425.0 H679L679 432.9 H678L678 433.3 H677L677 441.8 H676L676 441.8 H675L675 441.8 H674L674 441.8 H673L673 441.8 H672L672 441.8 H671L671 441.8 H670L670 441.8 H669L669 441.8 H668L668 433.2 H667L667 430.9 H666L666 441.8 H665L665 441.8 H664L664 441.8 H663L663 439.3 H662L662 441.8 H661L661 435.0 H660L660 441.8 H659L659 441.8 H658L658 441.8 H657L657 441.8 H656L656 441.8 H655L655 433.8 H654L654 441.8 H653L653 437.6 H652L652 441.8 H651L651 441.8 H650L650 434.9 H649L649 441.8 H648L648 441.8 H647L647 441.8 H646L646 438.4 H645L645 441.8 H644L644 441.8 H643L643 441.8 H642L642 441.8 H641L641 441.8 H640L640 429.9 H639L639 441.8 H638L638 441.8 H637L637 441.8 H636L636 441.8 H635L635 441.8 H634L634 441.8 H633L633 441.8 H632L632 441.8 H631L631 441.8 H630L630 441.8 H629L629 441.8 H628L628 433.4 H627L627 441.8 H626L626 428.1 H625L625 441.8 H624L624 441.8 H623L623 441.8 H622L622 432.2 H621L621 425.2 H620L620 441.8 H619L619 441.8 H618L618 441.8 H617L617 441.8 H616L616 441.8 H615L615 441.8 H614L614 441.8 H613L613 441.8 H612L612 441.8 H611L611 441.8 H610L610 441.8 H609L609 441.8 H608L608 441.8 H607L607 441.8 H606L606 441.8 H605L605 437.1 H604L604 441.8 H603L603 441.8 H602L602 441.8 H601L601 441.8 H600L600 438.2 H599L599 441.8 H598L598 441.8 H597L597 441.8 H596L596 441.8 H595L595 441.8 H594L594 441.8 H593L593 441.8 H592L592 441.8 H591L591 441.8 H590L590 441.8 H589L589 441.8 H588L588 441.8 H587L587 441.8 H586L586 441.8 H585L585 441.8 H584L584 428.8 H583L583 441.8 H582L582 441.8 H581L581 441.8 H580L580 430.0 H579L579 441.8 H578L578 441.8 H577L577 441.8 H576L576 441.8 H575L575 441.8 H574L574 441.8 H573L573 439.3 H572L572 441.8 H571L571 441.8 H570L570 441.8 H569L569 438.5 H568L568 425.9 H567L567 432.2 H566L566 441.8 H565L565 441.8 H564L564 425.2 H563L563 441.8 H562L562 441.8 H561L561 441.8 H560L560 428.6 H559L559 441.8 H558L558 441.8 H557L557 441.8 H556L556 441.8 H555L555 441.8 H554L554 441.8 H553L553 441.8 H552L552 441.8 H551L551 441.8 H550L550 441.8 H549L549 441.8 H548L548 441.8 H547L547 441.8 H546L546 441.8 H545L545 439.0 H544L544 436.0 H543L543 432.1 H542L542 441.8 H541L541 441.8 H540L540 441.8 H539L539 441.8 H538L538 441.8 H537L537 435.3 H536L536 441.8 H535L535 441.8 H534L534 437.5 H533L533 441.8 H532L532 441.8 H531L531 441.8 H530L530 441.8 H529L529 441.8 H528L528 441.8 H527L527 441.8 H526L526 441.8 H525L525 439.3 H524L524 441.8 H523L523 441.8 H522L522 441.8 H521L521 441.8 H520L520 441.8 H519L519 441.8 H518L518 441.8 H517L517 441.8 H516L516 438.9 H515L515 441.8 H514L514 441.8 H513L513 441.8 H512L512 441.8 H511L511 441.8 H510L510 441.8 H509L509 441.8 H508L508 441.8 H507L507 441.8 H506L506 441.8 H505L505 441.8 H504L504 434.6 H503L503 441.8 H502L502 441.8 H501L501 441.8 H500L500 441.8 H499L499 441.8 H498L498 436.5 H497L497 441.8 H496L496 436.7 H495L495 441.8 H494L494 441.8 H493L493 441.8 H492L492 441.8 H491L491 441.8 H490L490 441.8 H489L489 441.8 H488L488 441.8 H487L487 441.8 H486L486 441.8 H485L485 441.8 H484L484 441.8 H483L483 441.8 H482L482 441.8 H481L481 441.8 H480L480 441.8 H479L479 441.8 H478L478 441.8 H477L477 441.8 H476L476 441.8 H475L475 441.8 H474L474 441.8 H473L473 441.8 H472L472 441.8 H471L471 441.8 H470L470 441.8 H469L469 441.8 H468L468 441.8 H467L467 441.8 H466L466 441.8 H465L465 441.8 H464L464 441.8 H463L463 441.8 H462L462 441.8 H461L461 441.8 H460L460 441.8 H459L459 441.8 H458L458 441.8 H457L457 441.8 H456L456 437.2 H455L455 441.8 H454L454 441.8 H453L453 441.8 H452L452 441.8 H451L451 441.8 H450L450 441.8 H449L449 441.8 H448L448 441.8 H447L447 441.8 H446L446 441.8 H445L445 441.8 H444L444 441.8 H443L443 441.8 H442L442 441.8 H441L441 441.8 H440L440 441.8 H439L439 441.8 H438L438 441.8 H437L437 441.8 H436L436 441.8 H435L435 441.8 H434L434 441.8 H433L433 429.2 H432L432 441.8 H431L431 441.8 H430L430 439.4 H429L429 441.8 H428L428 441.8 H427L427 441.8 H426L426 441.8 H425L425 434.3 H424L424 441.8 H423L423 441.8 H422L422 441.8 H421L421 441.8 H420L420 437.3 H419L419 441.8 H418L418 441.8 H417L417 441.8 H416L416 441.8 H415L415 429.9 H414L414 441.8 H413L413 441.8 H412L412 433.9 H411L411 441.8 H410L410 441.8 H409L409 441.8 H408L408 441.8 H407L407 441.8 H406L406 441.8 H405L405 441.8 H404L404 441.8 H403L403 441.8 H402L402 441.8 H401L401 441.8 H400L400 441.8 H399L399 441.8 H398L398 441.8 H397L397 441.8 H396L396 438.9 H395L395 441.8 H394L394 441.8 H393L393 441.8 H392L392 441.8 H391L391 436.7 H390L390 438.8 H389L389 441.8 H388L388 438.3 H387L387 441.8 H386L386 441.8 H385L385 441.8 H384L384 441.8 H383L383 441.8 H382L382 441.8 H381L381 441.8 H380L380 439.4 H379L379 441.8 H378L378 438.3 H377L377 441.8 H376L376 441.8 H375L375 441.8 H374L374 433.6 H373L373 441.8 H372L372 441.8 H371L371 441.8 H370L370 441.8 H369L369 441.8 H368L368 441.8 H367L367 441.8 H366L366 431.5 H365L365 441.8 H364L364 441.8 H363L363 441.8 H362L362 441.8 H361L361 441.8 H360L360 441.8 H359L359 441.8 H358L358 441.8 H357L357 441.8 H356L356 441.8 H355L355 441.8 H354L354 441.8 H353L353 441.8 H352L352 432.1 H351L351 441.8 H350L350 441.8 H349L349 441.8 H348L348 441.8 H347L347 441.8 H346L346 434.6 H345L345 441.8 H344L344 441.8 H343L343 441.8 H342L342 441.8 H341L341 441.8 H340L340 441.8 H339L339 429.6 H338L338 441.8 H337L337 441.8 H336L336 441.8 H335L335 441.8 H334L334 439.4 H333L333 441.8 H332L332 441.8 H331L331 441.8 H330L330 441.8 H329L329 400.2 H328L328 399.5 H327L327 400.1 H326L326 402.6 H325L325 405.4 H324L324 407.8 H323L323 407.5 H322L322 403.6 H321L321 399.7 H320L320 397.1 H319L319 401.5 H318L318 400.8 H317L317 400.0 H316L316 401.9 H315L315 402.1 H314L314 406.8 H313L313 403.3 H312L312 404.8 H311L311 405.7 H310L310 405.0 H309L309 409.7 H308L308 405.2 H307L307 410.4 H306L306 402.3 H305L305 403.4 H304L304 405.9 H303L303 400.4 H302L302 399.2 H301L301 401.5 H300L300 403.1 H299L299 406.4 H298L298 406.0 H297L297 407.2 H296L296 403.9 H295L295 407.3 H294L294 412.1 H293L293 405.4 H292L292 408.4 H291L291 406.6 H290L290 405.9 H289L289 408.3 H288L288 402.4 H287L287 403.4 H286L286 398.0 H285L285 399.2 H284L284 400.6 H283L283 395.8 H282L282 401.0 H281L281 398.8 H280L280 402.0 H279L279 399.8 H278L278 399.8 H277L277 402.7 H276L276 401.4 H275L275 397.2 H274L274 396.7 H273L273 397.2 H272L272 400.8 H271L271 398.8 H270L270 401.4 H269L269 399.1 H268L268 400.9 H267L267 403.9 H266L266 404.3 H265L265 408.5 H264L264 402.3 H263L263 401.4 H262L262 401.0 H261L261 398.7 H260L260 397.2 H259L259 402.4 H258L258 398.9 H257L257 398.3 H256L256 396.9 H255L255 398.3 H254L254 397.5 H253L253 399.1 H252L252 408.4 H251L251 403.7 H250L250 405.3 H249L249 403.6 H248L248 410.0 H247L247 402.7 H246L246 402.0 H245L245 400.6 H244L244 401.5 H243L243 398.2 H242L242 400.4 H241L241 397.7 H240L240 400.3 H239L239 398.4 H238L238 398.1 H237L237 399.0 H236L236 399.9 H235L235 400.2 H234L234 399.6 H233L233 399.2 H232L232 396.6 H231L231 395.1 H230L230 396.2 H229L229 396.8 H228L228 398.4 H227L227 404.9 H226L226 400.1 H225L225 401.8 H224L224 401.0 H223L223 401.1 H222L222 400.0 H221L221 399.5 H220L220 399.0 H219L219 397.8 H218L218 398.3 H217L217 397.9 H216L216 400.6 H215L215 397.4 H214L214 402.6 H213L213 393.8 H212L212 393.5 H211L211 393.6 H210L210 392.5 H209L209 393.1 H208L208 390.9 H207L207 392.4 H206L206 395.0 H205L205 395.1 H204L204 395.9 H203L203 396.0 H202L202 399.5 H201L201 396.8 H200L200 395.7 H199L199 397.8 H198L198 397.7 H197L197 395.4 H196L196 397.6 H195L195 396.7 H194L194 398.3 H193L193 395.9 H192L192 395.2 H191L191 394.1 H190L190 393.6 H189L189 395.7 H188L188 396.1 H187L187 396.4 H185.4Z" fill="#7171e2"/><rect x="154" y="304.6" width="1009" height="1.2" fill="#0b0c10"/></svg>
<div class="abs" style="left:154px;top:304.6px;width:32px;height:1.2px;background:#0b0c10"></div>
<div class="abs" style="left:2.6px;top:444.6px;width:1161px;height:1.2px;background:#0b0c10"></div>
<div class="t" style="left:191.6px;top:153.6px;font-size:14px;letter-spacing:.06px;color:#fff">02 - Haken - Atlas Stone</div>
<div class="menu" style="left:461.3px;top:51.8px;width:356.6px;height:546.8px;border-radius:1px 1px 7px 7px">
<div class="hl" style="left:6.199999999999989px;top:406.59999999999997px;width:344.5px;height:22.4px"></div>
<div class="sep" style="left:9.199999999999989px;top:29.1px;width:338.5px"></div>
<div class="sep" style="left:9.199999999999989px;top:83.9px;width:338.5px"></div>
<div class="sep" style="left:9.199999999999989px;top:115.9px;width:338.5px"></div>
<div class="sep" style="left:9.199999999999989px;top:332.1px;width:338.5px"></div>
<div class="mi" style="left:37.6px;top:2.9px">Erweiterungsverwaltung</div>
<div class="mi" style="left:37.6px;top:34.9px">Echtzeit-Effekte hinzufügen</div>
<div class="mi" style="left:auto;right:25.6px;top:34.9px">E</div>
<div class="mi" style="left:37.6px;top:57.9px">Mehr Effekte holen...</div>
<div class="mi dis" style="left:37.6px;top:90.0px">Letzten Effekt wiederholen</div>
<div class="mi dis" style="left:auto;right:25.6px;top:90.0px">Ctrl+R</div>
<div class="mi" style="left:37.6px;top:121.8px">Lautstärke und Kompression</div>
<svg class="abs" style="left:334.2px;top:127.9px" width="9" height="11" viewBox="0 0 9 11"><path d="M2.3 1.6 L6.3 5.5 L2.3 9.4" fill="none" stroke="#2a2a2a" stroke-width="1.15"/></svg>
<div class="mi" style="left:37.6px;top:144.8px">Überblendungen</div>
<svg class="abs" style="left:334.2px;top:150.9px" width="9" height="11" viewBox="0 0 9 11"><path d="M2.3 1.6 L6.3 5.5 L2.3 9.4" fill="none" stroke="#2a2a2a" stroke-width="1.15"/></svg>
<div class="mi" style="left:37.6px;top:167.8px">Tonhöhe und Tempo</div>
<svg class="abs" style="left:334.2px;top:173.9px" width="9" height="11" viewBox="0 0 9 11"><path d="M2.3 1.6 L6.3 5.5 L2.3 9.4" fill="none" stroke="#2a2a2a" stroke-width="1.15"/></svg>
<div class="mi" style="left:37.6px;top:190.8px">EQ und Filter</div>
<svg class="abs" style="left:334.2px;top:196.9px" width="9" height="11" viewBox="0 0 9 11"><path d="M2.3 1.6 L6.3 5.5 L2.3 9.4" fill="none" stroke="#2a2a2a" stroke-width="1.15"/></svg>
<div class="mi" style="left:37.6px;top:213.8px">Geräuschentfernung und Reparatur</div>
<svg class="abs" style="left:334.2px;top:219.9px" width="9" height="11" viewBox="0 0 9 11"><path d="M2.3 1.6 L6.3 5.5 L2.3 9.4" fill="none" stroke="#2a2a2a" stroke-width="1.15"/></svg>
<div class="mi" style="left:37.6px;top:236.8px">Verzögerung und Hall</div>
<svg class="abs" style="left:334.2px;top:242.9px" width="9" height="11" viewBox="0 0 9 11"><path d="M2.3 1.6 L6.3 5.5 L2.3 9.4" fill="none" stroke="#2a2a2a" stroke-width="1.15"/></svg>
<div class="mi" style="left:37.6px;top:259.8px">Verzerrung und Modulation</div>
<svg class="abs" style="left:334.2px;top:265.9px" width="9" height="11" viewBox="0 0 9 11"><path d="M2.3 1.6 L6.3 5.5 L2.3 9.4" fill="none" stroke="#2a2a2a" stroke-width="1.15"/></svg>
<div class="mi" style="left:37.6px;top:282.8px">Spezial</div>
<svg class="abs" style="left:334.2px;top:288.9px" width="9" height="11" viewBox="0 0 9 11"><path d="M2.3 1.6 L6.3 5.5 L2.3 9.4" fill="none" stroke="#2a2a2a" stroke-width="1.15"/></svg>
<div class="mi" style="left:37.6px;top:305.8px">Legacy</div>
<svg class="abs" style="left:334.2px;top:311.9px" width="9" height="11" viewBox="0 0 9 11"><path d="M2.3 1.6 L6.3 5.5 L2.3 9.4" fill="none" stroke="#2a2a2a" stroke-width="1.15"/></svg>
<div class="mi" style="left:37.6px;top:337.8px">Übersteuerungen beheben</div>
<div class="mi" style="left:37.6px;top:360.8px">Dominic Mazzoni</div>
<svg class="abs" style="left:334.2px;top:366.9px" width="9" height="11" viewBox="0 0 9 11"><path d="M2.3 1.6 L6.3 5.5 L2.3 9.4" fill="none" stroke="#2a2a2a" stroke-width="1.15"/></svg>
<div class="mi" style="left:37.6px;top:383.8px">Helix Native</div>
<div class="mi" style="left:37.6px;top:406.8px">OpenVINO AI Effects</div>
<svg class="abs" style="left:334.2px;top:412.9px" width="9" height="11" viewBox="0 0 9 11"><path d="M2.3 1.6 L6.3 5.5 L2.3 9.4" fill="none" stroke="#2a2a2a" stroke-width="1.15"/></svg>
<div class="mi" style="left:37.6px;top:429.8px">Paul Licameli</div>
<svg class="abs" style="left:334.2px;top:435.9px" width="9" height="11" viewBox="0 0 9 11"><path d="M2.3 1.6 L6.3 5.5 L2.3 9.4" fill="none" stroke="#2a2a2a" stroke-width="1.15"/></svg>
<div class="mi" style="left:37.6px;top:452.8px">Gesang-Reduzierung und Isolation</div>
<div class="mi" style="left:37.6px;top:475.8px">Steve Daulton</div>
<svg class="abs" style="left:334.2px;top:481.9px" width="9" height="11" viewBox="0 0 9 11"><path d="M2.3 1.6 L6.3 5.5 L2.3 9.4" fill="none" stroke="#2a2a2a" stroke-width="1.15"/></svg>
<div class="mi" style="left:37.6px;top:498.8px">Kerbfilter</div>
<div class="mi" style="left:37.6px;top:521.8px">SC4</div>
</div>
<div class="menu" style="left:812.6px;top:455.2px;width:303.3px;height:120.6px">
<div class="hl" style="left:5.4px;top:26.8px;width:292px;height:22.2px"></div>
<div class="mi" style="left:37.1px;top:3.4px">OpenVINO Music Generation</div>
<div class="mi" style="left:37.1px;top:26.4px">OpenVINO Music Separation</div>
<div class="mi" style="left:37.1px;top:49.4px">OpenVINO Noise Suppression</div>
<div class="mi" style="left:37.1px;top:72.4px">OpenVINO Super Resolution</div>
<div class="mi" style="left:37.1px;top:95.4px">OpenVINO Whisper Transcription</div>
</div>
<svg class="abs" style="left:690px;top:450px" width="420" height="80" viewBox="690 450 420 80"><g fill="none" stroke="#23ab49" stroke-width="3" stroke-linecap="round" stroke-linejoin="round"><path d="M707 464.6 C714 463.6 722 462.6 730.2 460.8"/><path d="M706.4 467 C714 466.4 722 465.6 729.8 465.2" stroke-width="3.2"/><path d="M709 465.6 L728 463.4" stroke-width="3"/><path d="M711.9 467 C712.4 473 712.6 480 713 487.4 M713 470 L713.8 484.5" stroke-width="3"/><path d="M712.4 468 C715.5 471 718 474.5 721 476.8 C725 479.5 729 481.5 732.6 484.4 C735.5 487.5 738 490.5 741 493.6"/><path d="M1046 488.3 C1049 489.4 1052 490.6 1055 491.3 C1061 492 1068 492.6 1074 493 C1078 493.4 1082 493.6 1084.6 494.4 C1084 496.6 1081.5 497.8 1079 497.6 C1076 496.8 1073.5 495.4 1071 494.6 C1066 493.6 1061 493 1056.6 492.4" stroke-width="2.7"/><path d="M1052.2 491.4 C1051 497 1049.5 503 1047.8 509.4 M1051.8 494 C1050.8 498 1050.4 500.5 1050.6 503" stroke-width="3"/><path d="M1053 491.2 C1057 496.6 1061 502 1064 505.4 C1067.5 509.4 1071 513.4 1074.4 517.4" stroke-width="2.9"/></g></svg></body></html>
